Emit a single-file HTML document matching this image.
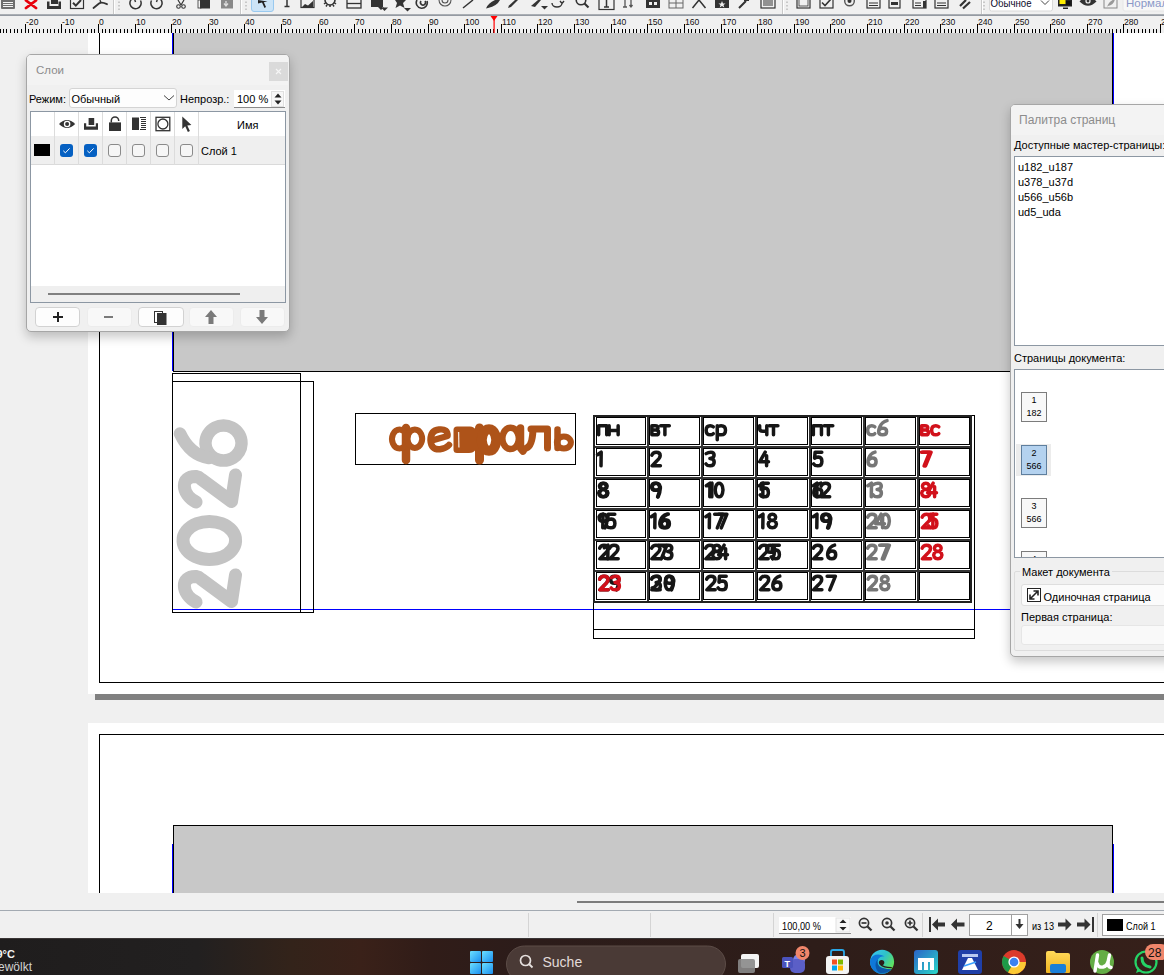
<!DOCTYPE html>
<html><head><meta charset="utf-8">
<style>
*{margin:0;padding:0;box-sizing:border-box}
html,body{width:1164px;height:975px;overflow:hidden;background:#f0f0f0;font-family:"Liberation Sans",sans-serif;position:relative}
.a{position:absolute}
.page{background:#fff}
.bk{background:#000}
.bl{background:#0000ff}
.gr{background:#c8c8c8}
svg text{font-family:"Liberation Sans",sans-serif}
</style></head><body>
<div class="a" style="left:0;top:0;width:1164px;height:14px;background:#f0f0f0"></div>
<div class="a" style="left:0;top:14px;width:1164px;height:2px;background:linear-gradient(#b4b8bc,#8a9099)"></div>
<svg class="a" style="left:0;top:0" width="1164" height="14">
 <g fill="#333" stroke="none">
  <!-- doc lines icon -->
  <path d="M1 0 H15 V8 Q15 9 14 9 H2 Q1 9 1 8Z" fill="#6e6e6e"/>
  <path d="M3 2.5h10M3 4.5h10M3 6.5h10" stroke="#f4f4f4" stroke-width="1"/>
  <!-- red X -->
  <path d="M26 0.5 L36 8 M36 0.5 L26 8" stroke="#e8000b" stroke-width="2.8" stroke-linecap="round"/>
  <!-- save/print -->
  <rect x="51" y="0" width="7" height="4"/>
  <path d="M47 1.5h2.5v4.5h9v-4.5h2.5v7.5h-14z"/>
  <!-- checkbox -->
  <rect x="70.5" y="-2" width="13" height="10.5" fill="none" stroke="#333" stroke-width="1.2"/>
  <path d="M73 2.8 L75.8 5.6 L81 0" stroke="#333" stroke-width="2" fill="none"/>
  <!-- pdf -->
  <path d="M93.5 8 L99 3.5 Q101 2 104 3 L107 4.2" stroke="#333" stroke-width="1.8" fill="none" stroke-linecap="round"/>
  <path d="M100 0 L101 3" stroke="#333" stroke-width="1.3"/>
  <!-- separators -->
  <rect x="113" y="0" width="1" height="14" fill="#c8c8c8"/><rect x="114" y="0" width="1" height="14" fill="#fff"/>
  <path d="M119 1.5v1.5M119 5v1.5M119 8.5v1.5" stroke="#b0b0b0" stroke-width="1.2"/>
  <!-- undo/redo arcs -->
  <path d="M135 -2.5 A5.6 5.6 0 1 0 140.5 0.5" stroke="#333" stroke-width="1.5" fill="none"/><path d="M134.5 -1 L135.5 2" stroke="#333" stroke-width="1.4"/>
  <path d="M157 -2.5 A5.6 5.6 0 1 1 151.5 0.5" stroke="#333" stroke-width="1.5" fill="none"/><path d="M157.5 -1 L156.5 2" stroke="#333" stroke-width="1.4"/>
  <!-- scissors -->
  <path d="M178 0 L181 5 M184 0 L181 5" stroke="#333" stroke-width="1.2"/>
  <circle cx="178.5" cy="6.5" r="1.8" fill="none" stroke="#333" stroke-width="1.1"/>
  <circle cx="183.5" cy="6.5" r="1.8" fill="none" stroke="#333" stroke-width="1.1"/>
  <!-- copy -->
  <rect x="198" y="0" width="3" height="8" fill="none" stroke="#333" stroke-width="0.8"/>
  <rect x="200" y="0" width="10" height="8.5"/>
  <!-- paste disabled -->
  <rect x="221" y="0" width="12" height="8.5" fill="#888"/>
  <path d="M226 1v4M224 3.5l2 2.5 2-2.5" stroke="#ddd" stroke-width="1.3" fill="none"/>
  <rect x="240" y="0" width="1" height="14" fill="#c8c8c8"/><rect x="241" y="0" width="1" height="14" fill="#fff"/>
  <path d="M246 1.5v1.5M246 5v1.5M246 8.5v1.5" stroke="#b0b0b0" stroke-width="1.2"/>
  <!-- selected arrow tool -->
  <rect x="251.5" y="-4" width="22" height="15.5" rx="2.5" fill="#cce4f7" stroke="#99c9ef" stroke-width="1"/>
  <path d="M258 0 L258 3.5 L262 2.5 L264.5 8 L266 7 L263.8 2.2 L267.5 1.5Z" fill="#222"/>
  <!-- text tool -->
  <path d="M287 0v6.5M284.5 6.5h5" stroke="#333" stroke-width="1.5"/>
  <!-- image frame -->
  <rect x="301" y="-2" width="13" height="9.5" fill="none" stroke="#333" stroke-width="1.2"/>
  <path d="M302 7 L305 4 L308 5.5 L313 1 V7Z"/>
  <!-- gear -->
  <circle cx="330" cy="0" r="5" fill="none" stroke="#333" stroke-width="1.6"/>
  <path d="M324 4l2 -1.5M336 4l-2-1.5M330 7v-2M326 6.5l1-1.7M334 6.5l-1-1.7" stroke="#333" stroke-width="1.5"/>
  <!-- table -->
  <rect x="347" y="-1" width="14" height="9" fill="none" stroke="#333" stroke-width="1.3"/>
  <path d="M347 3.5h14" stroke="#333" stroke-width="1.3"/>
  <!-- shape -->
  <rect x="371" y="-2" width="12" height="9" fill="#333"/>
  <rect x="373" y="-2" width="10" height="8" fill="#fff" opacity="0"/>
  <path d="M378 7 L381 10 L384 7Z M381 6h2v2"/>
  <path d="M381 7.5 L388 7.5 L384.5 11Z"/>
  <!-- star -->
  <path d="M395 0 L402 0 L406 0 L403 3 L404.5 8 L400 5.5 L395.5 8 L397 3Z"/>
  <path d="M404 8 L411 8 L407.5 11.5Z"/>
  <!-- spiral C -->
  <path d="M427 1 A5.5 5.5 0 1 1 417 0" stroke="#333" stroke-width="1.6" fill="none"/>
  <path d="M425 1 A2.5 2.5 0 1 1 421 1" stroke="#333" stroke-width="1.6" fill="none"/>
  <path d="M451 0 A6 6 0 1 1 439 0 M448 0 A3 3 0 1 1 442 0" stroke="#555" stroke-width="1.1" fill="none"/>
  <!-- line -->
  <path d="M463 8 L473 0" stroke="#333" stroke-width="1.5"/>
  <!-- pen -->
  <path d="M486 8.5 Q488 3 495 0 L500 0 Q497 6 488 8Z"/>
  <!-- pencil -->
  <path d="M508 8 L509 5.5 L515 0 L518 0 L511 7Z"/>
  <!-- calligraphy -->
  <path d="M531 6 L538 0 L541 0 L535 7Z"/>
  <path d="M541 6 L548 6 L544.5 9.5Z"/>
  <!-- rotate -->
  <path d="M552 3 A5 4 0 0 0 562 3 M560 1 L562 3.5 L564 1" stroke="#333" stroke-width="1.4" fill="none"/>
  <!-- zoom -->
  <circle cx="581" cy="0" r="4.8" fill="none" stroke="#333" stroke-width="1.6"/>
  <path d="M584.5 3.5 L588.5 7.5" stroke="#333" stroke-width="2.2"/>
  <!-- edit text -->
  <rect x="599" y="-2" width="15" height="11.5" fill="none" stroke="#333" stroke-width="1.2"/>
  <path d="M606.5 0v7M604 7h5" stroke="#333" stroke-width="1.5"/>
  <!-- text I with arrows -->
  <path d="M625 0v7M623 7h4M631 0v7M629.5 5l1.5 2 1.5-2" stroke="#555" stroke-width="1.3" fill="none"/>
  <!-- link frames -->
  <rect x="646" y="-2" width="14" height="10" fill="#333"/>
  <path d="M649 2h3v3h-3zM654 2h3v3h-3z" fill="#f0f0f0"/>
  <rect x="669" y="-2" width="14" height="10" fill="none" stroke="#666" stroke-width="1"/>
  <path d="M676 -2v10M669 3h14" stroke="#666" stroke-width="1"/>
  <!-- measure -->
  <path d="M692.5 8 L699 0 L705.5 8" stroke="#333" stroke-width="1.5" fill="none"/>
  <!-- star box -->
  <rect x="715" y="-2" width="14" height="10" fill="#333"/>
  <path d="M722 1 L723 3.5 L725.5 3.5 L723.5 5 L724.3 7.5 L722 6 L719.7 7.5 L720.5 5 L718.5 3.5 L721 3.5Z" fill="#f0f0f0"/>
  <!-- eyedropper -->
  <path d="M739 8 L746 1 M744 0 L749 0" stroke="#333" stroke-width="2"/>
  <!-- barcode -->
  <rect x="761" y="-2" width="14" height="10" fill="none" stroke="#333" stroke-width="1.2"/>
  <path d="M764 0v6M766 0v6M768 0v6M770 0v6M772 0v6" stroke="#333" stroke-width="1"/>
  <rect x="782" y="0" width="1" height="14" fill="#c8c8c8"/><rect x="783" y="0" width="1" height="14" fill="#fff"/>
  <path d="M787 1.5v1.5M787 5v1.5M787 8.5v1.5" stroke="#b0b0b0" stroke-width="1.2"/>
  <!-- form widgets -->
  <rect x="797" y="-2" width="13" height="10" fill="none" stroke="#333" stroke-width="1.2"/>
  <rect x="799" y="-2" width="9" height="8" fill="none" stroke="#333" stroke-width="0.8"/>
  <rect x="820" y="-2" width="13" height="10" fill="none" stroke="#333" stroke-width="1.2"/>
  <path d="M822 2.5 L825 5.5 L831 -1" stroke="#333" stroke-width="1.6" fill="none"/>
  <circle cx="849.5" cy="1" r="4.8" fill="none" stroke="#555" stroke-width="1.4"/><circle cx="849.5" cy="1" r="2" fill="#333"/>
  <rect x="867" y="-2" width="13" height="10" fill="none" stroke="#333" stroke-width="1.2"/><path d="M869 3h9M869 5.5h9" stroke="#333" stroke-width="1"/>
  <rect x="889" y="-2" width="11" height="10" fill="none" stroke="#333" stroke-width="1.2"/><rect x="891" y="2" width="7" height="3"/>
  <rect x="913" y="-2" width="13" height="10" fill="none" stroke="#333" stroke-width="1.2"/><rect x="923" y="1" width="3" height="7"/><path d="M915 3h6M915 5.5h6" stroke="#333" stroke-width="1"/>
  <rect x="935" y="-2" width="13" height="10" fill="none" stroke="#333" stroke-width="1.2"/><path d="M937 3h9M937 5.5h9" stroke="#333" stroke-width="1"/>
  <path d="M960 6 L966 0 M963 8.5 L970 2" stroke="#333" stroke-width="2.2"/>
  <rect x="981" y="0" width="1" height="14" fill="#c8c8c8"/><rect x="982" y="0" width="1" height="14" fill="#fff"/>
  <path d="M984 1.5v1.5M984 5v1.5M984 8.5v1.5" stroke="#b0b0b0" stroke-width="1.2"/>
  <!-- combo Обычное -->
  <rect x="989.5" y="-3" width="63" height="14" rx="2" fill="#fff" stroke="#d8d8d8" stroke-width="1"/>
  <path d="M1041 0.5 L1045 4.5 L1049 0.5" stroke="#444" stroke-width="1" fill="none"/>
  <!-- display -->
  <rect x="1058" y="-2" width="14" height="8.5" fill="#222"/><rect x="1059.5" y="-1" width="6" height="5" fill="#ffee00"/><rect x="1066" y="1" width="4.5" height="4" fill="#111"/><rect x="1063" y="7.5" width="5" height="1.5" fill="#222"/>
  <!-- eye -->
  <path d="M1079.5 1.5 Q1088 -8 1096.5 1.5 Q1088 10 1079.5 1.5Z" fill="#333"/><circle cx="1088" cy="1" r="2.6" fill="#f0f0f0"/><circle cx="1088" cy="1" r="1.4" fill="#333"/>
  <!-- leaf box -->
  <rect x="1104" y="-2" width="13" height="10" fill="none" stroke="#888" stroke-width="1"/>
  <path d="M1107 7 Q1109 1 1115 -1 Q1114 5 1108 6Z" fill="#999"/>
  <!-- input Нормаль -->
  <rect x="1123" y="-3" width="50" height="14" rx="2" fill="#f7f7f7" stroke="#e6e6e6" stroke-width="1"/>
 </g>
 <text x="990.5" y="6.5" font-size="11" fill="#0a0a2a" textLength="41" lengthAdjust="spacingAndGlyphs">Обычное</text>
 <text x="1126" y="6.5" font-size="11.5" fill="#8a98c8">Нормаль</text>
</svg>
<svg class="a" style="left:0;top:16px" width="1164" height="17">
<rect width="1164" height="17" fill="#f0f0f0"/>
<rect x="0" y="13" width="1" height="4" fill="#000"/>
<rect x="3" y="13" width="1" height="4" fill="#000"/>
<rect x="6" y="13" width="1" height="4" fill="#000"/>
<rect x="10" y="13" width="1" height="4" fill="#000"/>
<rect x="14" y="13" width="1" height="4" fill="#000"/>
<rect x="17" y="13" width="1" height="4" fill="#000"/>
<rect x="21" y="13" width="1" height="4" fill="#000"/>
<rect x="25" y="8" width="1" height="9" fill="#000"/>
<text x="26" y="9" font-size="8.6" font-family="Liberation Sans" fill="#111">-20</text>
<rect x="28" y="13" width="1" height="4" fill="#000"/>
<rect x="32" y="13" width="1" height="4" fill="#000"/>
<rect x="36" y="13" width="1" height="4" fill="#000"/>
<rect x="39" y="13" width="1" height="4" fill="#000"/>
<rect x="43" y="13" width="1" height="4" fill="#000"/>
<rect x="47" y="13" width="1" height="4" fill="#000"/>
<rect x="50" y="13" width="1" height="4" fill="#000"/>
<rect x="54" y="13" width="1" height="4" fill="#000"/>
<rect x="58" y="13" width="1" height="4" fill="#000"/>
<rect x="61" y="8" width="1" height="9" fill="#000"/>
<text x="62" y="9" font-size="8.6" font-family="Liberation Sans" fill="#111">-10</text>
<rect x="65" y="13" width="1" height="4" fill="#000"/>
<rect x="69" y="13" width="1" height="4" fill="#000"/>
<rect x="72" y="13" width="1" height="4" fill="#000"/>
<rect x="76" y="13" width="1" height="4" fill="#000"/>
<rect x="80" y="13" width="1" height="4" fill="#000"/>
<rect x="83" y="13" width="1" height="4" fill="#000"/>
<rect x="87" y="13" width="1" height="4" fill="#000"/>
<rect x="91" y="13" width="1" height="4" fill="#000"/>
<rect x="94" y="13" width="1" height="4" fill="#000"/>
<rect x="98" y="8" width="1" height="9" fill="#000"/>
<text x="99" y="9" font-size="8.6" font-family="Liberation Sans" fill="#111">0</text>
<rect x="102" y="13" width="1" height="4" fill="#000"/>
<rect x="105" y="13" width="1" height="4" fill="#000"/>
<rect x="109" y="13" width="1" height="4" fill="#000"/>
<rect x="113" y="13" width="1" height="4" fill="#000"/>
<rect x="116" y="13" width="1" height="4" fill="#000"/>
<rect x="120" y="13" width="1" height="4" fill="#000"/>
<rect x="124" y="13" width="1" height="4" fill="#000"/>
<rect x="127" y="13" width="1" height="4" fill="#000"/>
<rect x="131" y="13" width="1" height="4" fill="#000"/>
<rect x="135" y="8" width="1" height="9" fill="#000"/>
<text x="136" y="9" font-size="8.6" font-family="Liberation Sans" fill="#111">10</text>
<rect x="138" y="13" width="1" height="4" fill="#000"/>
<rect x="142" y="13" width="1" height="4" fill="#000"/>
<rect x="146" y="13" width="1" height="4" fill="#000"/>
<rect x="149" y="13" width="1" height="4" fill="#000"/>
<rect x="153" y="13" width="1" height="4" fill="#000"/>
<rect x="157" y="13" width="1" height="4" fill="#000"/>
<rect x="160" y="13" width="1" height="4" fill="#000"/>
<rect x="164" y="13" width="1" height="4" fill="#000"/>
<rect x="168" y="13" width="1" height="4" fill="#000"/>
<rect x="171" y="8" width="1" height="9" fill="#000"/>
<text x="172" y="9" font-size="8.6" font-family="Liberation Sans" fill="#111">20</text>
<rect x="175" y="13" width="1" height="4" fill="#000"/>
<rect x="179" y="13" width="1" height="4" fill="#000"/>
<rect x="182" y="13" width="1" height="4" fill="#000"/>
<rect x="186" y="13" width="1" height="4" fill="#000"/>
<rect x="190" y="13" width="1" height="4" fill="#000"/>
<rect x="193" y="13" width="1" height="4" fill="#000"/>
<rect x="197" y="13" width="1" height="4" fill="#000"/>
<rect x="201" y="13" width="1" height="4" fill="#000"/>
<rect x="204" y="13" width="1" height="4" fill="#000"/>
<rect x="208" y="8" width="1" height="9" fill="#000"/>
<text x="209" y="9" font-size="8.6" font-family="Liberation Sans" fill="#111">30</text>
<rect x="212" y="13" width="1" height="4" fill="#000"/>
<rect x="215" y="13" width="1" height="4" fill="#000"/>
<rect x="219" y="13" width="1" height="4" fill="#000"/>
<rect x="223" y="13" width="1" height="4" fill="#000"/>
<rect x="226" y="13" width="1" height="4" fill="#000"/>
<rect x="230" y="13" width="1" height="4" fill="#000"/>
<rect x="233" y="13" width="1" height="4" fill="#000"/>
<rect x="237" y="13" width="1" height="4" fill="#000"/>
<rect x="241" y="13" width="1" height="4" fill="#000"/>
<rect x="244" y="8" width="1" height="9" fill="#000"/>
<text x="245" y="9" font-size="8.6" font-family="Liberation Sans" fill="#111">40</text>
<rect x="248" y="13" width="1" height="4" fill="#000"/>
<rect x="252" y="13" width="1" height="4" fill="#000"/>
<rect x="255" y="13" width="1" height="4" fill="#000"/>
<rect x="259" y="13" width="1" height="4" fill="#000"/>
<rect x="263" y="13" width="1" height="4" fill="#000"/>
<rect x="266" y="13" width="1" height="4" fill="#000"/>
<rect x="270" y="13" width="1" height="4" fill="#000"/>
<rect x="274" y="13" width="1" height="4" fill="#000"/>
<rect x="277" y="13" width="1" height="4" fill="#000"/>
<rect x="281" y="8" width="1" height="9" fill="#000"/>
<text x="282" y="9" font-size="8.6" font-family="Liberation Sans" fill="#111">50</text>
<rect x="285" y="13" width="1" height="4" fill="#000"/>
<rect x="288" y="13" width="1" height="4" fill="#000"/>
<rect x="292" y="13" width="1" height="4" fill="#000"/>
<rect x="296" y="13" width="1" height="4" fill="#000"/>
<rect x="299" y="13" width="1" height="4" fill="#000"/>
<rect x="303" y="13" width="1" height="4" fill="#000"/>
<rect x="307" y="13" width="1" height="4" fill="#000"/>
<rect x="310" y="13" width="1" height="4" fill="#000"/>
<rect x="314" y="13" width="1" height="4" fill="#000"/>
<rect x="318" y="8" width="1" height="9" fill="#000"/>
<text x="319" y="9" font-size="8.6" font-family="Liberation Sans" fill="#111">60</text>
<rect x="321" y="13" width="1" height="4" fill="#000"/>
<rect x="325" y="13" width="1" height="4" fill="#000"/>
<rect x="329" y="13" width="1" height="4" fill="#000"/>
<rect x="332" y="13" width="1" height="4" fill="#000"/>
<rect x="336" y="13" width="1" height="4" fill="#000"/>
<rect x="340" y="13" width="1" height="4" fill="#000"/>
<rect x="343" y="13" width="1" height="4" fill="#000"/>
<rect x="347" y="13" width="1" height="4" fill="#000"/>
<rect x="351" y="13" width="1" height="4" fill="#000"/>
<rect x="354" y="8" width="1" height="9" fill="#000"/>
<text x="355" y="9" font-size="8.6" font-family="Liberation Sans" fill="#111">70</text>
<rect x="358" y="13" width="1" height="4" fill="#000"/>
<rect x="362" y="13" width="1" height="4" fill="#000"/>
<rect x="365" y="13" width="1" height="4" fill="#000"/>
<rect x="369" y="13" width="1" height="4" fill="#000"/>
<rect x="373" y="13" width="1" height="4" fill="#000"/>
<rect x="376" y="13" width="1" height="4" fill="#000"/>
<rect x="380" y="13" width="1" height="4" fill="#000"/>
<rect x="384" y="13" width="1" height="4" fill="#000"/>
<rect x="387" y="13" width="1" height="4" fill="#000"/>
<rect x="391" y="8" width="1" height="9" fill="#000"/>
<text x="392" y="9" font-size="8.6" font-family="Liberation Sans" fill="#111">80</text>
<rect x="395" y="13" width="1" height="4" fill="#000"/>
<rect x="398" y="13" width="1" height="4" fill="#000"/>
<rect x="402" y="13" width="1" height="4" fill="#000"/>
<rect x="406" y="13" width="1" height="4" fill="#000"/>
<rect x="409" y="13" width="1" height="4" fill="#000"/>
<rect x="413" y="13" width="1" height="4" fill="#000"/>
<rect x="417" y="13" width="1" height="4" fill="#000"/>
<rect x="420" y="13" width="1" height="4" fill="#000"/>
<rect x="424" y="13" width="1" height="4" fill="#000"/>
<rect x="428" y="8" width="1" height="9" fill="#000"/>
<text x="429" y="9" font-size="8.6" font-family="Liberation Sans" fill="#111">90</text>
<rect x="431" y="13" width="1" height="4" fill="#000"/>
<rect x="435" y="13" width="1" height="4" fill="#000"/>
<rect x="439" y="13" width="1" height="4" fill="#000"/>
<rect x="442" y="13" width="1" height="4" fill="#000"/>
<rect x="446" y="13" width="1" height="4" fill="#000"/>
<rect x="450" y="13" width="1" height="4" fill="#000"/>
<rect x="453" y="13" width="1" height="4" fill="#000"/>
<rect x="457" y="13" width="1" height="4" fill="#000"/>
<rect x="461" y="13" width="1" height="4" fill="#000"/>
<rect x="464" y="8" width="1" height="9" fill="#000"/>
<text x="465" y="9" font-size="8.6" font-family="Liberation Sans" fill="#111">100</text>
<rect x="468" y="13" width="1" height="4" fill="#000"/>
<rect x="472" y="13" width="1" height="4" fill="#000"/>
<rect x="475" y="13" width="1" height="4" fill="#000"/>
<rect x="479" y="13" width="1" height="4" fill="#000"/>
<rect x="483" y="13" width="1" height="4" fill="#000"/>
<rect x="486" y="13" width="1" height="4" fill="#000"/>
<rect x="490" y="13" width="1" height="4" fill="#000"/>
<rect x="493" y="13" width="1" height="4" fill="#000"/>
<rect x="497" y="13" width="1" height="4" fill="#000"/>
<rect x="501" y="8" width="1" height="9" fill="#000"/>
<text x="502" y="9" font-size="8.6" font-family="Liberation Sans" fill="#111">110</text>
<rect x="504" y="13" width="1" height="4" fill="#000"/>
<rect x="508" y="13" width="1" height="4" fill="#000"/>
<rect x="512" y="13" width="1" height="4" fill="#000"/>
<rect x="515" y="13" width="1" height="4" fill="#000"/>
<rect x="519" y="13" width="1" height="4" fill="#000"/>
<rect x="523" y="13" width="1" height="4" fill="#000"/>
<rect x="526" y="13" width="1" height="4" fill="#000"/>
<rect x="530" y="13" width="1" height="4" fill="#000"/>
<rect x="534" y="13" width="1" height="4" fill="#000"/>
<rect x="537" y="8" width="1" height="9" fill="#000"/>
<text x="538" y="9" font-size="8.6" font-family="Liberation Sans" fill="#111">120</text>
<rect x="541" y="13" width="1" height="4" fill="#000"/>
<rect x="545" y="13" width="1" height="4" fill="#000"/>
<rect x="548" y="13" width="1" height="4" fill="#000"/>
<rect x="552" y="13" width="1" height="4" fill="#000"/>
<rect x="556" y="13" width="1" height="4" fill="#000"/>
<rect x="559" y="13" width="1" height="4" fill="#000"/>
<rect x="563" y="13" width="1" height="4" fill="#000"/>
<rect x="567" y="13" width="1" height="4" fill="#000"/>
<rect x="570" y="13" width="1" height="4" fill="#000"/>
<rect x="574" y="8" width="1" height="9" fill="#000"/>
<text x="575" y="9" font-size="8.6" font-family="Liberation Sans" fill="#111">130</text>
<rect x="578" y="13" width="1" height="4" fill="#000"/>
<rect x="581" y="13" width="1" height="4" fill="#000"/>
<rect x="585" y="13" width="1" height="4" fill="#000"/>
<rect x="589" y="13" width="1" height="4" fill="#000"/>
<rect x="592" y="13" width="1" height="4" fill="#000"/>
<rect x="596" y="13" width="1" height="4" fill="#000"/>
<rect x="600" y="13" width="1" height="4" fill="#000"/>
<rect x="603" y="13" width="1" height="4" fill="#000"/>
<rect x="607" y="13" width="1" height="4" fill="#000"/>
<rect x="611" y="8" width="1" height="9" fill="#000"/>
<text x="612" y="9" font-size="8.6" font-family="Liberation Sans" fill="#111">140</text>
<rect x="614" y="13" width="1" height="4" fill="#000"/>
<rect x="618" y="13" width="1" height="4" fill="#000"/>
<rect x="622" y="13" width="1" height="4" fill="#000"/>
<rect x="625" y="13" width="1" height="4" fill="#000"/>
<rect x="629" y="13" width="1" height="4" fill="#000"/>
<rect x="633" y="13" width="1" height="4" fill="#000"/>
<rect x="636" y="13" width="1" height="4" fill="#000"/>
<rect x="640" y="13" width="1" height="4" fill="#000"/>
<rect x="644" y="13" width="1" height="4" fill="#000"/>
<rect x="647" y="8" width="1" height="9" fill="#000"/>
<text x="648" y="9" font-size="8.6" font-family="Liberation Sans" fill="#111">150</text>
<rect x="651" y="13" width="1" height="4" fill="#000"/>
<rect x="655" y="13" width="1" height="4" fill="#000"/>
<rect x="658" y="13" width="1" height="4" fill="#000"/>
<rect x="662" y="13" width="1" height="4" fill="#000"/>
<rect x="666" y="13" width="1" height="4" fill="#000"/>
<rect x="669" y="13" width="1" height="4" fill="#000"/>
<rect x="673" y="13" width="1" height="4" fill="#000"/>
<rect x="677" y="13" width="1" height="4" fill="#000"/>
<rect x="680" y="13" width="1" height="4" fill="#000"/>
<rect x="684" y="8" width="1" height="9" fill="#000"/>
<text x="685" y="9" font-size="8.6" font-family="Liberation Sans" fill="#111">160</text>
<rect x="688" y="13" width="1" height="4" fill="#000"/>
<rect x="691" y="13" width="1" height="4" fill="#000"/>
<rect x="695" y="13" width="1" height="4" fill="#000"/>
<rect x="699" y="13" width="1" height="4" fill="#000"/>
<rect x="702" y="13" width="1" height="4" fill="#000"/>
<rect x="706" y="13" width="1" height="4" fill="#000"/>
<rect x="710" y="13" width="1" height="4" fill="#000"/>
<rect x="713" y="13" width="1" height="4" fill="#000"/>
<rect x="717" y="13" width="1" height="4" fill="#000"/>
<rect x="721" y="8" width="1" height="9" fill="#000"/>
<text x="722" y="9" font-size="8.6" font-family="Liberation Sans" fill="#111">170</text>
<rect x="724" y="13" width="1" height="4" fill="#000"/>
<rect x="728" y="13" width="1" height="4" fill="#000"/>
<rect x="732" y="13" width="1" height="4" fill="#000"/>
<rect x="735" y="13" width="1" height="4" fill="#000"/>
<rect x="739" y="13" width="1" height="4" fill="#000"/>
<rect x="743" y="13" width="1" height="4" fill="#000"/>
<rect x="746" y="13" width="1" height="4" fill="#000"/>
<rect x="750" y="13" width="1" height="4" fill="#000"/>
<rect x="753" y="13" width="1" height="4" fill="#000"/>
<rect x="757" y="8" width="1" height="9" fill="#000"/>
<text x="758" y="9" font-size="8.6" font-family="Liberation Sans" fill="#111">180</text>
<rect x="761" y="13" width="1" height="4" fill="#000"/>
<rect x="764" y="13" width="1" height="4" fill="#000"/>
<rect x="768" y="13" width="1" height="4" fill="#000"/>
<rect x="772" y="13" width="1" height="4" fill="#000"/>
<rect x="775" y="13" width="1" height="4" fill="#000"/>
<rect x="779" y="13" width="1" height="4" fill="#000"/>
<rect x="783" y="13" width="1" height="4" fill="#000"/>
<rect x="786" y="13" width="1" height="4" fill="#000"/>
<rect x="790" y="13" width="1" height="4" fill="#000"/>
<rect x="794" y="8" width="1" height="9" fill="#000"/>
<text x="795" y="9" font-size="8.6" font-family="Liberation Sans" fill="#111">190</text>
<rect x="797" y="13" width="1" height="4" fill="#000"/>
<rect x="801" y="13" width="1" height="4" fill="#000"/>
<rect x="805" y="13" width="1" height="4" fill="#000"/>
<rect x="808" y="13" width="1" height="4" fill="#000"/>
<rect x="812" y="13" width="1" height="4" fill="#000"/>
<rect x="816" y="13" width="1" height="4" fill="#000"/>
<rect x="819" y="13" width="1" height="4" fill="#000"/>
<rect x="823" y="13" width="1" height="4" fill="#000"/>
<rect x="827" y="13" width="1" height="4" fill="#000"/>
<rect x="830" y="8" width="1" height="9" fill="#000"/>
<text x="831" y="9" font-size="8.6" font-family="Liberation Sans" fill="#111">200</text>
<rect x="834" y="13" width="1" height="4" fill="#000"/>
<rect x="838" y="13" width="1" height="4" fill="#000"/>
<rect x="841" y="13" width="1" height="4" fill="#000"/>
<rect x="845" y="13" width="1" height="4" fill="#000"/>
<rect x="849" y="13" width="1" height="4" fill="#000"/>
<rect x="852" y="13" width="1" height="4" fill="#000"/>
<rect x="856" y="13" width="1" height="4" fill="#000"/>
<rect x="860" y="13" width="1" height="4" fill="#000"/>
<rect x="863" y="13" width="1" height="4" fill="#000"/>
<rect x="867" y="8" width="1" height="9" fill="#000"/>
<text x="868" y="9" font-size="8.6" font-family="Liberation Sans" fill="#111">210</text>
<rect x="871" y="13" width="1" height="4" fill="#000"/>
<rect x="874" y="13" width="1" height="4" fill="#000"/>
<rect x="878" y="13" width="1" height="4" fill="#000"/>
<rect x="882" y="13" width="1" height="4" fill="#000"/>
<rect x="885" y="13" width="1" height="4" fill="#000"/>
<rect x="889" y="13" width="1" height="4" fill="#000"/>
<rect x="893" y="13" width="1" height="4" fill="#000"/>
<rect x="896" y="13" width="1" height="4" fill="#000"/>
<rect x="900" y="13" width="1" height="4" fill="#000"/>
<rect x="904" y="8" width="1" height="9" fill="#000"/>
<text x="905" y="9" font-size="8.6" font-family="Liberation Sans" fill="#111">220</text>
<rect x="907" y="13" width="1" height="4" fill="#000"/>
<rect x="911" y="13" width="1" height="4" fill="#000"/>
<rect x="915" y="13" width="1" height="4" fill="#000"/>
<rect x="918" y="13" width="1" height="4" fill="#000"/>
<rect x="922" y="13" width="1" height="4" fill="#000"/>
<rect x="926" y="13" width="1" height="4" fill="#000"/>
<rect x="929" y="13" width="1" height="4" fill="#000"/>
<rect x="933" y="13" width="1" height="4" fill="#000"/>
<rect x="937" y="13" width="1" height="4" fill="#000"/>
<rect x="940" y="8" width="1" height="9" fill="#000"/>
<text x="941" y="9" font-size="8.6" font-family="Liberation Sans" fill="#111">230</text>
<rect x="944" y="13" width="1" height="4" fill="#000"/>
<rect x="948" y="13" width="1" height="4" fill="#000"/>
<rect x="951" y="13" width="1" height="4" fill="#000"/>
<rect x="955" y="13" width="1" height="4" fill="#000"/>
<rect x="959" y="13" width="1" height="4" fill="#000"/>
<rect x="962" y="13" width="1" height="4" fill="#000"/>
<rect x="966" y="13" width="1" height="4" fill="#000"/>
<rect x="970" y="13" width="1" height="4" fill="#000"/>
<rect x="973" y="13" width="1" height="4" fill="#000"/>
<rect x="977" y="8" width="1" height="9" fill="#000"/>
<text x="978" y="9" font-size="8.6" font-family="Liberation Sans" fill="#111">240</text>
<rect x="981" y="13" width="1" height="4" fill="#000"/>
<rect x="984" y="13" width="1" height="4" fill="#000"/>
<rect x="988" y="13" width="1" height="4" fill="#000"/>
<rect x="992" y="13" width="1" height="4" fill="#000"/>
<rect x="995" y="13" width="1" height="4" fill="#000"/>
<rect x="999" y="13" width="1" height="4" fill="#000"/>
<rect x="1003" y="13" width="1" height="4" fill="#000"/>
<rect x="1006" y="13" width="1" height="4" fill="#000"/>
<rect x="1010" y="13" width="1" height="4" fill="#000"/>
<rect x="1014" y="8" width="1" height="9" fill="#000"/>
<text x="1015" y="9" font-size="8.6" font-family="Liberation Sans" fill="#111">250</text>
<rect x="1017" y="13" width="1" height="4" fill="#000"/>
<rect x="1021" y="13" width="1" height="4" fill="#000"/>
<rect x="1024" y="13" width="1" height="4" fill="#000"/>
<rect x="1028" y="13" width="1" height="4" fill="#000"/>
<rect x="1032" y="13" width="1" height="4" fill="#000"/>
<rect x="1035" y="13" width="1" height="4" fill="#000"/>
<rect x="1039" y="13" width="1" height="4" fill="#000"/>
<rect x="1043" y="13" width="1" height="4" fill="#000"/>
<rect x="1046" y="13" width="1" height="4" fill="#000"/>
<rect x="1050" y="8" width="1" height="9" fill="#000"/>
<text x="1051" y="9" font-size="8.6" font-family="Liberation Sans" fill="#111">260</text>
<rect x="1054" y="13" width="1" height="4" fill="#000"/>
<rect x="1057" y="13" width="1" height="4" fill="#000"/>
<rect x="1061" y="13" width="1" height="4" fill="#000"/>
<rect x="1065" y="13" width="1" height="4" fill="#000"/>
<rect x="1068" y="13" width="1" height="4" fill="#000"/>
<rect x="1072" y="13" width="1" height="4" fill="#000"/>
<rect x="1076" y="13" width="1" height="4" fill="#000"/>
<rect x="1079" y="13" width="1" height="4" fill="#000"/>
<rect x="1083" y="13" width="1" height="4" fill="#000"/>
<rect x="1087" y="8" width="1" height="9" fill="#000"/>
<text x="1088" y="9" font-size="8.6" font-family="Liberation Sans" fill="#111">270</text>
<rect x="1090" y="13" width="1" height="4" fill="#000"/>
<rect x="1094" y="13" width="1" height="4" fill="#000"/>
<rect x="1098" y="13" width="1" height="4" fill="#000"/>
<rect x="1101" y="13" width="1" height="4" fill="#000"/>
<rect x="1105" y="13" width="1" height="4" fill="#000"/>
<rect x="1109" y="13" width="1" height="4" fill="#000"/>
<rect x="1112" y="13" width="1" height="4" fill="#000"/>
<rect x="1116" y="13" width="1" height="4" fill="#000"/>
<rect x="1120" y="13" width="1" height="4" fill="#000"/>
<rect x="1123" y="8" width="1" height="9" fill="#000"/>
<text x="1124" y="9" font-size="8.6" font-family="Liberation Sans" fill="#111">280</text>
<rect x="1127" y="13" width="1" height="4" fill="#000"/>
<rect x="1131" y="13" width="1" height="4" fill="#000"/>
<rect x="1134" y="13" width="1" height="4" fill="#000"/>
<rect x="1138" y="13" width="1" height="4" fill="#000"/>
<rect x="1142" y="13" width="1" height="4" fill="#000"/>
<rect x="1145" y="13" width="1" height="4" fill="#000"/>
<rect x="1149" y="13" width="1" height="4" fill="#000"/>
<rect x="1153" y="13" width="1" height="4" fill="#000"/>
<rect x="1156" y="13" width="1" height="4" fill="#000"/>
<rect x="1160" y="8" width="1" height="9" fill="#000"/>
<text x="1161" y="9" font-size="8.6" font-family="Liberation Sans" fill="#111">290</text>
<rect x="1164" y="13" width="1" height="4" fill="#000"/>
<path d="M490.5 0 L497.5 0 L494 5 Z" fill="#ff0000"/><rect x="493.5" y="0" width="1.2" height="17" fill="#ff0000"/>
</svg><div class="a" style="left:0;top:33px;width:1164px;height:860px;background:#f0f0f0;overflow:hidden">
<svg class="a" style="left:0;top:0" width="1164" height="860" shape-rendering="crispEdges">
<rect x="88" y="0" width="1076" height="661" fill="#fff"/>
<rect x="99" y="0" width="1" height="650" fill="#000"/>
<rect x="99" y="649" width="1065" height="1" fill="#000"/>
<rect x="173" y="0" width="940" height="339" fill="#c8c8c8"/>
<rect x="173" y="338" width="940" height="1" fill="#000"/>
<rect x="1112" y="0" width="1" height="339" fill="#000"/>
<rect x="173" y="0" width="1" height="339" fill="#000"/>
<rect x="172" y="0" width="1" height="338" fill="#0000ff"/>
<rect x="1113" y="0" width="1" height="338" fill="#0000ff"/>
<rect x="95" y="661" width="1069" height="6" fill="#808080"/>
<rect x="88" y="690" width="1076" height="170" fill="#fff"/>
<rect x="99" y="701" width="1065" height="1" fill="#000"/>
<rect x="99" y="701" width="1" height="160" fill="#000"/>
<rect x="173" y="792" width="940" height="68" fill="#c8c8c8"/>
<rect x="173" y="792" width="940" height="1" fill="#000"/>
<rect x="173" y="792" width="1" height="68" fill="#000"/>
<rect x="1112" y="792" width="1" height="68" fill="#000"/>
<rect x="172" y="811" width="1" height="49" fill="#0000ff"/>
<rect x="1113" y="811" width="1" height="49" fill="#0000ff"/>
<rect x="173" y="576" width="991" height="1" fill="#0000ff"/>
<rect x="172" y="340" width="129" height="1" fill="#000"/>
<rect x="172" y="579" width="129" height="1" fill="#000"/>
<rect x="172" y="340" width="1" height="240" fill="#000"/>
<rect x="300" y="340" width="1" height="240" fill="#000"/>
<rect x="172" y="348" width="142" height="1" fill="#000"/>
<rect x="172" y="579" width="142" height="1" fill="#000"/>
<rect x="172" y="348" width="1" height="232" fill="#000"/>
<rect x="313" y="348" width="1" height="232" fill="#000"/>
<rect x="355" y="380" width="221" height="1" fill="#000"/>
<rect x="355" y="431" width="221" height="1" fill="#000"/>
<rect x="355" y="380" width="1" height="52" fill="#000"/>
<rect x="575" y="380" width="1" height="52" fill="#000"/>
<rect x="593" y="382" width="382" height="1" fill="#000"/>
<rect x="593" y="605" width="382" height="1" fill="#000"/>
<rect x="593" y="382" width="1" height="224" fill="#000"/>
<rect x="974" y="382" width="1" height="224" fill="#000"/>
<rect x="593" y="596" width="382" height="1" fill="#000"/>
<rect x="593" y="382" width="379" height="2" fill="#222"/>
<rect x="593" y="568" width="379" height="2" fill="#222"/>
<rect x="593" y="382" width="2" height="188" fill="#222"/>
<rect x="970" y="382" width="2" height="188" fill="#222"/>
<rect x="647" y="384" width="2" height="184" fill="#333"/>
<rect x="701" y="384" width="2" height="184" fill="#333"/>
<rect x="755" y="384" width="2" height="184" fill="#333"/>
<rect x="809" y="384" width="2" height="184" fill="#333"/>
<rect x="863" y="384" width="2" height="184" fill="#333"/>
<rect x="917" y="384" width="2" height="184" fill="#333"/>
<rect x="595" y="413" width="375" height="2" fill="#333"/>
<rect x="595" y="444" width="375" height="2" fill="#333"/>
<rect x="595" y="475" width="375" height="2" fill="#333"/>
<rect x="595" y="506" width="375" height="2" fill="#333"/>
<rect x="595" y="537" width="375" height="2" fill="#333"/>
<rect x="596" y="384" width="50" height="1" fill="#000"/>
<rect x="596" y="411" width="50" height="1" fill="#000"/>
<rect x="596" y="384" width="1" height="28" fill="#000"/>
<rect x="645" y="384" width="1" height="28" fill="#000"/>
<rect x="596" y="415" width="50" height="1" fill="#000"/>
<rect x="596" y="442" width="50" height="1" fill="#000"/>
<rect x="596" y="415" width="1" height="28" fill="#000"/>
<rect x="645" y="415" width="1" height="28" fill="#000"/>
<rect x="596" y="446" width="50" height="1" fill="#000"/>
<rect x="596" y="473" width="50" height="1" fill="#000"/>
<rect x="596" y="446" width="1" height="28" fill="#000"/>
<rect x="645" y="446" width="1" height="28" fill="#000"/>
<rect x="596" y="477" width="50" height="1" fill="#000"/>
<rect x="596" y="504" width="50" height="1" fill="#000"/>
<rect x="596" y="477" width="1" height="28" fill="#000"/>
<rect x="645" y="477" width="1" height="28" fill="#000"/>
<rect x="596" y="508" width="50" height="1" fill="#000"/>
<rect x="596" y="535" width="50" height="1" fill="#000"/>
<rect x="596" y="508" width="1" height="28" fill="#000"/>
<rect x="645" y="508" width="1" height="28" fill="#000"/>
<rect x="596" y="539" width="50" height="1" fill="#000"/>
<rect x="596" y="566" width="50" height="1" fill="#000"/>
<rect x="596" y="539" width="1" height="28" fill="#000"/>
<rect x="645" y="539" width="1" height="28" fill="#000"/>
<rect x="649" y="384" width="51" height="1" fill="#000"/>
<rect x="649" y="411" width="51" height="1" fill="#000"/>
<rect x="649" y="384" width="1" height="28" fill="#000"/>
<rect x="699" y="384" width="1" height="28" fill="#000"/>
<rect x="649" y="415" width="51" height="1" fill="#000"/>
<rect x="649" y="442" width="51" height="1" fill="#000"/>
<rect x="649" y="415" width="1" height="28" fill="#000"/>
<rect x="699" y="415" width="1" height="28" fill="#000"/>
<rect x="649" y="446" width="51" height="1" fill="#000"/>
<rect x="649" y="473" width="51" height="1" fill="#000"/>
<rect x="649" y="446" width="1" height="28" fill="#000"/>
<rect x="699" y="446" width="1" height="28" fill="#000"/>
<rect x="649" y="477" width="51" height="1" fill="#000"/>
<rect x="649" y="504" width="51" height="1" fill="#000"/>
<rect x="649" y="477" width="1" height="28" fill="#000"/>
<rect x="699" y="477" width="1" height="28" fill="#000"/>
<rect x="649" y="508" width="51" height="1" fill="#000"/>
<rect x="649" y="535" width="51" height="1" fill="#000"/>
<rect x="649" y="508" width="1" height="28" fill="#000"/>
<rect x="699" y="508" width="1" height="28" fill="#000"/>
<rect x="649" y="539" width="51" height="1" fill="#000"/>
<rect x="649" y="566" width="51" height="1" fill="#000"/>
<rect x="649" y="539" width="1" height="28" fill="#000"/>
<rect x="699" y="539" width="1" height="28" fill="#000"/>
<rect x="703" y="384" width="51" height="1" fill="#000"/>
<rect x="703" y="411" width="51" height="1" fill="#000"/>
<rect x="703" y="384" width="1" height="28" fill="#000"/>
<rect x="753" y="384" width="1" height="28" fill="#000"/>
<rect x="703" y="415" width="51" height="1" fill="#000"/>
<rect x="703" y="442" width="51" height="1" fill="#000"/>
<rect x="703" y="415" width="1" height="28" fill="#000"/>
<rect x="753" y="415" width="1" height="28" fill="#000"/>
<rect x="703" y="446" width="51" height="1" fill="#000"/>
<rect x="703" y="473" width="51" height="1" fill="#000"/>
<rect x="703" y="446" width="1" height="28" fill="#000"/>
<rect x="753" y="446" width="1" height="28" fill="#000"/>
<rect x="703" y="477" width="51" height="1" fill="#000"/>
<rect x="703" y="504" width="51" height="1" fill="#000"/>
<rect x="703" y="477" width="1" height="28" fill="#000"/>
<rect x="753" y="477" width="1" height="28" fill="#000"/>
<rect x="703" y="508" width="51" height="1" fill="#000"/>
<rect x="703" y="535" width="51" height="1" fill="#000"/>
<rect x="703" y="508" width="1" height="28" fill="#000"/>
<rect x="753" y="508" width="1" height="28" fill="#000"/>
<rect x="703" y="539" width="51" height="1" fill="#000"/>
<rect x="703" y="566" width="51" height="1" fill="#000"/>
<rect x="703" y="539" width="1" height="28" fill="#000"/>
<rect x="753" y="539" width="1" height="28" fill="#000"/>
<rect x="757" y="384" width="51" height="1" fill="#000"/>
<rect x="757" y="411" width="51" height="1" fill="#000"/>
<rect x="757" y="384" width="1" height="28" fill="#000"/>
<rect x="807" y="384" width="1" height="28" fill="#000"/>
<rect x="757" y="415" width="51" height="1" fill="#000"/>
<rect x="757" y="442" width="51" height="1" fill="#000"/>
<rect x="757" y="415" width="1" height="28" fill="#000"/>
<rect x="807" y="415" width="1" height="28" fill="#000"/>
<rect x="757" y="446" width="51" height="1" fill="#000"/>
<rect x="757" y="473" width="51" height="1" fill="#000"/>
<rect x="757" y="446" width="1" height="28" fill="#000"/>
<rect x="807" y="446" width="1" height="28" fill="#000"/>
<rect x="757" y="477" width="51" height="1" fill="#000"/>
<rect x="757" y="504" width="51" height="1" fill="#000"/>
<rect x="757" y="477" width="1" height="28" fill="#000"/>
<rect x="807" y="477" width="1" height="28" fill="#000"/>
<rect x="757" y="508" width="51" height="1" fill="#000"/>
<rect x="757" y="535" width="51" height="1" fill="#000"/>
<rect x="757" y="508" width="1" height="28" fill="#000"/>
<rect x="807" y="508" width="1" height="28" fill="#000"/>
<rect x="757" y="539" width="51" height="1" fill="#000"/>
<rect x="757" y="566" width="51" height="1" fill="#000"/>
<rect x="757" y="539" width="1" height="28" fill="#000"/>
<rect x="807" y="539" width="1" height="28" fill="#000"/>
<rect x="811" y="384" width="51" height="1" fill="#000"/>
<rect x="811" y="411" width="51" height="1" fill="#000"/>
<rect x="811" y="384" width="1" height="28" fill="#000"/>
<rect x="861" y="384" width="1" height="28" fill="#000"/>
<rect x="811" y="415" width="51" height="1" fill="#000"/>
<rect x="811" y="442" width="51" height="1" fill="#000"/>
<rect x="811" y="415" width="1" height="28" fill="#000"/>
<rect x="861" y="415" width="1" height="28" fill="#000"/>
<rect x="811" y="446" width="51" height="1" fill="#000"/>
<rect x="811" y="473" width="51" height="1" fill="#000"/>
<rect x="811" y="446" width="1" height="28" fill="#000"/>
<rect x="861" y="446" width="1" height="28" fill="#000"/>
<rect x="811" y="477" width="51" height="1" fill="#000"/>
<rect x="811" y="504" width="51" height="1" fill="#000"/>
<rect x="811" y="477" width="1" height="28" fill="#000"/>
<rect x="861" y="477" width="1" height="28" fill="#000"/>
<rect x="811" y="508" width="51" height="1" fill="#000"/>
<rect x="811" y="535" width="51" height="1" fill="#000"/>
<rect x="811" y="508" width="1" height="28" fill="#000"/>
<rect x="861" y="508" width="1" height="28" fill="#000"/>
<rect x="811" y="539" width="51" height="1" fill="#000"/>
<rect x="811" y="566" width="51" height="1" fill="#000"/>
<rect x="811" y="539" width="1" height="28" fill="#000"/>
<rect x="861" y="539" width="1" height="28" fill="#000"/>
<rect x="865" y="384" width="51" height="1" fill="#000"/>
<rect x="865" y="411" width="51" height="1" fill="#000"/>
<rect x="865" y="384" width="1" height="28" fill="#000"/>
<rect x="915" y="384" width="1" height="28" fill="#000"/>
<rect x="865" y="415" width="51" height="1" fill="#000"/>
<rect x="865" y="442" width="51" height="1" fill="#000"/>
<rect x="865" y="415" width="1" height="28" fill="#000"/>
<rect x="915" y="415" width="1" height="28" fill="#000"/>
<rect x="865" y="446" width="51" height="1" fill="#000"/>
<rect x="865" y="473" width="51" height="1" fill="#000"/>
<rect x="865" y="446" width="1" height="28" fill="#000"/>
<rect x="915" y="446" width="1" height="28" fill="#000"/>
<rect x="865" y="477" width="51" height="1" fill="#000"/>
<rect x="865" y="504" width="51" height="1" fill="#000"/>
<rect x="865" y="477" width="1" height="28" fill="#000"/>
<rect x="915" y="477" width="1" height="28" fill="#000"/>
<rect x="865" y="508" width="51" height="1" fill="#000"/>
<rect x="865" y="535" width="51" height="1" fill="#000"/>
<rect x="865" y="508" width="1" height="28" fill="#000"/>
<rect x="915" y="508" width="1" height="28" fill="#000"/>
<rect x="865" y="539" width="51" height="1" fill="#000"/>
<rect x="865" y="566" width="51" height="1" fill="#000"/>
<rect x="865" y="539" width="1" height="28" fill="#000"/>
<rect x="915" y="539" width="1" height="28" fill="#000"/>
<rect x="919" y="384" width="51" height="1" fill="#000"/>
<rect x="919" y="411" width="51" height="1" fill="#000"/>
<rect x="919" y="384" width="1" height="28" fill="#000"/>
<rect x="969" y="384" width="1" height="28" fill="#000"/>
<rect x="919" y="415" width="51" height="1" fill="#000"/>
<rect x="919" y="442" width="51" height="1" fill="#000"/>
<rect x="919" y="415" width="1" height="28" fill="#000"/>
<rect x="969" y="415" width="1" height="28" fill="#000"/>
<rect x="919" y="446" width="51" height="1" fill="#000"/>
<rect x="919" y="473" width="51" height="1" fill="#000"/>
<rect x="919" y="446" width="1" height="28" fill="#000"/>
<rect x="969" y="446" width="1" height="28" fill="#000"/>
<rect x="919" y="477" width="51" height="1" fill="#000"/>
<rect x="919" y="504" width="51" height="1" fill="#000"/>
<rect x="919" y="477" width="1" height="28" fill="#000"/>
<rect x="969" y="477" width="1" height="28" fill="#000"/>
<rect x="919" y="508" width="51" height="1" fill="#000"/>
<rect x="919" y="535" width="51" height="1" fill="#000"/>
<rect x="919" y="508" width="1" height="28" fill="#000"/>
<rect x="969" y="508" width="1" height="28" fill="#000"/>
<rect x="919" y="539" width="51" height="1" fill="#000"/>
<rect x="919" y="566" width="51" height="1" fill="#000"/>
<rect x="919" y="539" width="1" height="28" fill="#000"/>
<rect x="969" y="539" width="1" height="28" fill="#000"/>
</svg>
<svg class="a" style="left:0;top:0" width="1164" height="860">
<path transform="translate(597,391)" d="M1.65 10.85 L1.65 1.65 L9.75 1.65 L9.75 10.85" stroke="#161616" stroke-width="3.5" fill="none" stroke-linecap="round" stroke-linejoin="round"/>
<path transform="translate(607.5,391)" d="M1.65 1.65 L1.65 10.85 M1.65 6.4 L10.65 6.4 M10.65 1.65 L10.65 10.85" stroke="#161616" stroke-width="3.5" fill="none" stroke-linecap="round" stroke-linejoin="round"/>
<path transform="translate(650.2,391)" d="M1.65 1.65 L1.65 10.85 L5.8 10.85 Q8.4 10.85 8.4 8.4 Q8.4 6 5.8 6 L1.65 6 M1.65 1.65 L5 1.65 Q7.8 1.65 7.8 3.8 Q7.8 6 5.5 6" stroke="#161616" stroke-width="3.5" fill="none" stroke-linecap="round" stroke-linejoin="round"/>
<path transform="translate(659,391)" d="M1.65 1.65 L10.3 1.65 M5.9 1.65 L5.9 10.85" stroke="#161616" stroke-width="3.5" fill="none" stroke-linecap="round" stroke-linejoin="round"/>
<path transform="translate(704.5,391)" d="M8.8 2.8 Q7.5 1.65 5.8 1.65 Q1.65 1.65 1.65 6.25 Q1.65 10.85 5.8 10.85 Q7.5 10.85 8.8 9.7" stroke="#161616" stroke-width="3.5" fill="none" stroke-linecap="round" stroke-linejoin="round"/>
<path transform="translate(715.6,391)" d="M1.65 1.65 L1.65 15.8 M1.65 3 Q3 1.65 5.5 1.65 Q9.9 1.65 9.9 6.25 Q9.9 10.85 5.5 10.85 Q3 10.85 1.65 9.5" stroke="#161616" stroke-width="3.5" fill="none" stroke-linecap="round" stroke-linejoin="round"/>
<path transform="translate(758,391)" d="M1.65 1.65 L1.65 4.5 Q1.65 7.3 5 7.3 L8.8 7.3 M8.8 1.65 L8.8 10.85" stroke="#161616" stroke-width="3.5" fill="none" stroke-linecap="round" stroke-linejoin="round"/>
<path transform="translate(767.6,391)" d="M1.65 1.65 L10.3 1.65 M5.9 1.65 L5.9 10.85" stroke="#161616" stroke-width="3.5" fill="none" stroke-linecap="round" stroke-linejoin="round"/>
<path transform="translate(811.7,391)" d="M1.65 10.85 L1.65 1.65 L9.75 1.65 L9.75 10.85" stroke="#161616" stroke-width="3.5" fill="none" stroke-linecap="round" stroke-linejoin="round"/>
<path transform="translate(822.5,391)" d="M1.65 1.65 L10.3 1.65 M5.9 1.65 L5.9 10.85" stroke="#161616" stroke-width="3.5" fill="none" stroke-linecap="round" stroke-linejoin="round"/>
<path transform="translate(866,391)" d="M8.8 2.8 Q7.5 1.65 5.8 1.65 Q1.65 1.65 1.65 6.25 Q1.65 10.85 5.8 10.85 Q7.5 10.85 8.8 9.7" stroke="#767676" stroke-width="3.5" fill="none" stroke-linecap="round" stroke-linejoin="round"/>
<path transform="translate(877,391)" d="M10 -3.4 Q5 -2.2 3 2.5 Q1.65 5.5 1.65 7.6 Q1.65 10.85 5.6 10.85 Q9.6 10.85 9.6 7.4 Q9.6 4.3 5.8 4.3 Q3 4.3 2 6.2" stroke="#767676" stroke-width="3.5" fill="none" stroke-linecap="round" stroke-linejoin="round"/>
<path transform="translate(920,391)" d="M1.65 1.65 L1.65 10.85 L5.8 10.85 Q8.4 10.85 8.4 8.4 Q8.4 6 5.8 6 L1.65 6 M1.65 1.65 L5 1.65 Q7.8 1.65 7.8 3.8 Q7.8 6 5.5 6" stroke="#d1111b" stroke-width="3.5" fill="none" stroke-linecap="round" stroke-linejoin="round"/>
<path transform="translate(930,391)" d="M8.8 2.8 Q7.5 1.65 5.8 1.65 Q1.65 1.65 1.65 6.25 Q1.65 10.85 5.8 10.85 Q7.5 10.85 8.8 9.7" stroke="#d1111b" stroke-width="3.5" fill="none" stroke-linecap="round" stroke-linejoin="round"/>
<path transform="translate(596.2,417.5)" d="M1.3 4.2 L5 1.65 L4.8 15.35" stroke="#161616" stroke-width="3.5" fill="none" stroke-linecap="round" stroke-linejoin="round"/>
<path transform="translate(650.2,417.5)" d="M1.65 4.6 Q2.8 1.65 6 1.65 Q10 1.65 10 5 Q10 7.5 6.5 10.5 L1.8 15.35 L10.2 15.35" stroke="#161616" stroke-width="3.5" fill="none" stroke-linecap="round" stroke-linejoin="round"/>
<path transform="translate(704.3,417.5)" d="M1.8 3.1 Q4 1.65 6.5 1.65 Q9.8 1.65 9.8 4.6 Q9.8 7.8 5.6 8 Q9.9 8.2 9.9 11.6 Q9.9 15.35 5.8 15.35 Q3 15.35 1.65 13.4" stroke="#161616" stroke-width="3.5" fill="none" stroke-linecap="round" stroke-linejoin="round"/>
<path transform="translate(758,417.5)" d="M7.2 1.65 L1.65 11.3 L10.5 11.3 M8.6 5.2 L8.6 15.35" stroke="#161616" stroke-width="3.5" fill="none" stroke-linecap="round" stroke-linejoin="round"/>
<path transform="translate(812,417.5)" d="M9.8 1.65 L3.1 1.65 L2.6 7.7 Q4.5 6.6 6.5 6.6 Q9.9 6.8 9.9 10.9 Q9.9 15.35 5.8 15.35 Q3 15.35 1.65 13.4" stroke="#161616" stroke-width="3.5" fill="none" stroke-linecap="round" stroke-linejoin="round"/>
<path transform="translate(866.2,417.5)" d="M8.8 1.65 Q4 3 2.3 8 Q1.65 10 1.8 11.5 Q2.2 15.35 6 15.35 Q9.9 15.35 9.9 11.3 Q9.9 7.6 6.2 7.6 Q3.5 7.6 2 10" stroke="#767676" stroke-width="3.5" fill="none" stroke-linecap="round" stroke-linejoin="round"/>
<path transform="translate(919.8,417.5)" d="M1.65 1.65 L9.9 1.65 L4.3 15.35" stroke="#d1111b" stroke-width="3.5" fill="none" stroke-linecap="round" stroke-linejoin="round"/>
<path transform="translate(921.2,417.5)" d="M1.65 1.65 L9.9 1.65 L4.3 15.35" stroke="#d1111b" stroke-width="3.5" fill="none" stroke-linecap="round" stroke-linejoin="round"/>
<path transform="translate(597,448.5)" d="M5.8 1.65 A3.4 3.15 0 1 0 5.81 1.65Z M5.8 7.85 A4.1 3.75 0 1 0 5.81 7.85Z" stroke="#161616" stroke-width="3.5" fill="none" stroke-linecap="round" stroke-linejoin="round"/>
<path transform="translate(598,448.5)" d="M5.8 1.65 A3.4 3.15 0 1 0 5.81 1.65Z M5.8 7.85 A4.1 3.75 0 1 0 5.81 7.85Z" stroke="#161616" stroke-width="3.5" fill="none" stroke-linecap="round" stroke-linejoin="round"/>
<path transform="translate(650,448.5)" d="M9.8 7 Q9.6 1.65 5.8 1.65 Q1.65 1.65 1.65 5.2 Q1.65 8.8 5.6 8.8 Q9 8.8 9.8 6 M9.8 5.5 Q9.6 11 7.6 15.35" stroke="#161616" stroke-width="3.5" fill="none" stroke-linecap="round" stroke-linejoin="round"/>
<path transform="translate(650.6,448.5)" d="M9.8 7 Q9.6 1.65 5.8 1.65 Q1.65 1.65 1.65 5.2 Q1.65 8.8 5.6 8.8 Q9 8.8 9.8 6 M9.8 5.5 Q9.6 11 7.6 15.35" stroke="#161616" stroke-width="3.5" fill="none" stroke-linecap="round" stroke-linejoin="round"/>
<path transform="translate(705,448.5)" d="M1.3 4.2 L5 1.65 L4.8 15.35" stroke="#161616" stroke-width="3.5" fill="none" stroke-linecap="round" stroke-linejoin="round"/>
<path transform="translate(707,448.5)" d="M1.3 4.2 L5 1.65 L4.8 15.35" stroke="#161616" stroke-width="3.5" fill="none" stroke-linecap="round" stroke-linejoin="round"/>
<path transform="translate(713.6,448.5)" d="M5.5 1.6500000000000004 A3.85 6.85 0 1 0 5.51 1.6500000000000004Z" stroke="#161616" stroke-width="3.5" fill="none" stroke-linecap="round" stroke-linejoin="round"/>
<path transform="translate(758,448.5)" d="M1.3 4.2 L5 1.65 L4.8 15.35" stroke="#161616" stroke-width="3.5" fill="none" stroke-linecap="round" stroke-linejoin="round"/>
<path transform="translate(758.5,448.5)" d="M9.8 1.65 L3.1 1.65 L2.6 7.7 Q4.5 6.6 6.5 6.6 Q9.9 6.8 9.9 10.9 Q9.9 15.35 5.8 15.35 Q3 15.35 1.65 13.4" stroke="#161616" stroke-width="3.5" fill="none" stroke-linecap="round" stroke-linejoin="round"/>
<path transform="translate(812,448.5)" d="M1.3 4.2 L5 1.65 L4.8 15.35" stroke="#161616" stroke-width="3.5" fill="none" stroke-linecap="round" stroke-linejoin="round"/>
<path transform="translate(812,448.5)" d="M8.8 1.65 Q4 3 2.3 8 Q1.65 10 1.8 11.5 Q2.2 15.35 6 15.35 Q9.9 15.35 9.9 11.3 Q9.9 7.6 6.2 7.6 Q3.5 7.6 2 10" stroke="#161616" stroke-width="3.5" fill="none" stroke-linecap="round" stroke-linejoin="round"/>
<path transform="translate(819.5,448.5)" d="M1.65 4.6 Q2.8 1.65 6 1.65 Q10 1.65 10 5 Q10 7.5 6.5 10.5 L1.8 15.35 L10.2 15.35" stroke="#161616" stroke-width="3.5" fill="none" stroke-linecap="round" stroke-linejoin="round"/>
<path transform="translate(866.5,448.5)" d="M1.3 4.2 L5 1.65 L4.8 15.35" stroke="#767676" stroke-width="3.5" fill="none" stroke-linecap="round" stroke-linejoin="round"/>
<path transform="translate(871.5,448.5)" d="M1.8 3.1 Q4 1.65 6.5 1.65 Q9.8 1.65 9.8 4.6 Q9.8 7.8 5.6 8 Q9.9 8.2 9.9 11.6 Q9.9 15.35 5.8 15.35 Q3 15.35 1.65 13.4" stroke="#767676" stroke-width="3.5" fill="none" stroke-linecap="round" stroke-linejoin="round"/>
<path transform="translate(920,448.5)" d="M5.8 1.65 A3.4 3.15 0 1 0 5.81 1.65Z M5.8 7.85 A4.1 3.75 0 1 0 5.81 7.85Z" stroke="#d1111b" stroke-width="3.5" fill="none" stroke-linecap="round" stroke-linejoin="round"/>
<path transform="translate(926,448.5)" d="M7.2 1.65 L1.65 11.3 L10.5 11.3 M8.6 5.2 L8.6 15.35" stroke="#d1111b" stroke-width="3.5" fill="none" stroke-linecap="round" stroke-linejoin="round"/>
<path transform="translate(598,479.5)" d="M1.3 4.2 L5 1.65 L4.8 15.35" stroke="#161616" stroke-width="3.5" fill="none" stroke-linecap="round" stroke-linejoin="round"/>
<path transform="translate(597.5,479.5)" d="M9.8 7 Q9.6 1.65 5.8 1.65 Q1.65 1.65 1.65 5.2 Q1.65 8.8 5.6 8.8 Q9 8.8 9.8 6 M9.8 5.5 Q9.6 11 7.6 15.35" stroke="#161616" stroke-width="3.5" fill="none" stroke-linecap="round" stroke-linejoin="round"/>
<path transform="translate(605,479.5)" d="M9.8 1.65 L3.1 1.65 L2.6 7.7 Q4.5 6.6 6.5 6.6 Q9.9 6.8 9.9 10.9 Q9.9 15.35 5.8 15.35 Q3 15.35 1.65 13.4" stroke="#161616" stroke-width="3.5" fill="none" stroke-linecap="round" stroke-linejoin="round"/>
<path transform="translate(650,479.5)" d="M1.3 4.2 L5 1.65 L4.8 15.35" stroke="#161616" stroke-width="3.5" fill="none" stroke-linecap="round" stroke-linejoin="round"/>
<path transform="translate(658,479.5)" d="M8.8 1.65 Q4 3 2.3 8 Q1.65 10 1.8 11.5 Q2.2 15.35 6 15.35 Q9.9 15.35 9.9 11.3 Q9.9 7.6 6.2 7.6 Q3.5 7.6 2 10" stroke="#161616" stroke-width="3.5" fill="none" stroke-linecap="round" stroke-linejoin="round"/>
<path transform="translate(659.5,479.5)" d="M8.8 1.65 Q4 3 2.3 8 Q1.65 10 1.8 11.5 Q2.2 15.35 6 15.35 Q9.9 15.35 9.9 11.3 Q9.9 7.6 6.2 7.6 Q3.5 7.6 2 10" stroke="#161616" stroke-width="3.5" fill="none" stroke-linecap="round" stroke-linejoin="round"/>
<path transform="translate(704.5,479.5)" d="M1.3 4.2 L5 1.65 L4.8 15.35" stroke="#161616" stroke-width="3.5" fill="none" stroke-linecap="round" stroke-linejoin="round"/>
<path transform="translate(713,479.5)" d="M1.65 1.65 L9.9 1.65 L4.3 15.35" stroke="#161616" stroke-width="3.5" fill="none" stroke-linecap="round" stroke-linejoin="round"/>
<path transform="translate(717,479.5)" d="M1.65 1.65 L9.9 1.65 L4.3 15.35" stroke="#161616" stroke-width="3.5" fill="none" stroke-linecap="round" stroke-linejoin="round"/>
<path transform="translate(758,479.5)" d="M1.3 4.2 L5 1.65 L4.8 15.35" stroke="#161616" stroke-width="3.5" fill="none" stroke-linecap="round" stroke-linejoin="round"/>
<path transform="translate(766.5,479.5)" d="M5.8 1.65 A3.4 3.15 0 1 0 5.81 1.65Z M5.8 7.85 A4.1 3.75 0 1 0 5.81 7.85Z" stroke="#161616" stroke-width="3.5" fill="none" stroke-linecap="round" stroke-linejoin="round"/>
<path transform="translate(812,479.5)" d="M1.3 4.2 L5 1.65 L4.8 15.35" stroke="#161616" stroke-width="3.5" fill="none" stroke-linecap="round" stroke-linejoin="round"/>
<path transform="translate(820,479.5)" d="M9.8 7 Q9.6 1.65 5.8 1.65 Q1.65 1.65 1.65 5.2 Q1.65 8.8 5.6 8.8 Q9 8.8 9.8 6 M9.8 5.5 Q9.6 11 7.6 15.35" stroke="#161616" stroke-width="3.5" fill="none" stroke-linecap="round" stroke-linejoin="round"/>
<path transform="translate(821,479.5)" d="M9.8 7 Q9.6 1.65 5.8 1.65 Q1.65 1.65 1.65 5.2 Q1.65 8.8 5.6 8.8 Q9 8.8 9.8 6 M9.8 5.5 Q9.6 11 7.6 15.35" stroke="#161616" stroke-width="3.5" fill="none" stroke-linecap="round" stroke-linejoin="round"/>
<path transform="translate(866,479.5)" d="M1.65 4.6 Q2.8 1.65 6 1.65 Q10 1.65 10 5 Q10 7.5 6.5 10.5 L1.8 15.35 L10.2 15.35" stroke="#767676" stroke-width="3.5" fill="none" stroke-linecap="round" stroke-linejoin="round"/>
<path transform="translate(874,479.5)" d="M7.2 1.65 L1.65 11.3 L10.5 11.3 M8.6 5.2 L8.6 15.35" stroke="#767676" stroke-width="3.5" fill="none" stroke-linecap="round" stroke-linejoin="round"/>
<path transform="translate(880,479.5)" d="M5.5 1.6500000000000004 A3.85 6.85 0 1 0 5.51 1.6500000000000004Z" stroke="#767676" stroke-width="3.5" fill="none" stroke-linecap="round" stroke-linejoin="round"/>
<path transform="translate(920.5,479.5)" d="M1.65 4.6 Q2.8 1.65 6 1.65 Q10 1.65 10 5 Q10 7.5 6.5 10.5 L1.8 15.35 L10.2 15.35" stroke="#d1111b" stroke-width="3.5" fill="none" stroke-linecap="round" stroke-linejoin="round"/>
<path transform="translate(928,479.5)" d="M1.3 4.2 L5 1.65 L4.8 15.35" stroke="#d1111b" stroke-width="3.5" fill="none" stroke-linecap="round" stroke-linejoin="round"/>
<path transform="translate(927,479.5)" d="M9.8 1.65 L3.1 1.65 L2.6 7.7 Q4.5 6.6 6.5 6.6 Q9.9 6.8 9.9 10.9 Q9.9 15.35 5.8 15.35 Q3 15.35 1.65 13.4" stroke="#d1111b" stroke-width="3.5" fill="none" stroke-linecap="round" stroke-linejoin="round"/>
<path transform="translate(598,510.5)" d="M1.65 4.6 Q2.8 1.65 6 1.65 Q10 1.65 10 5 Q10 7.5 6.5 10.5 L1.8 15.35 L10.2 15.35" stroke="#161616" stroke-width="3.5" fill="none" stroke-linecap="round" stroke-linejoin="round"/>
<path transform="translate(603,510.5)" d="M1.3 4.2 L5 1.65 L4.8 15.35" stroke="#161616" stroke-width="3.5" fill="none" stroke-linecap="round" stroke-linejoin="round"/>
<path transform="translate(608,510.5)" d="M1.65 4.6 Q2.8 1.65 6 1.65 Q10 1.65 10 5 Q10 7.5 6.5 10.5 L1.8 15.35 L10.2 15.35" stroke="#161616" stroke-width="3.5" fill="none" stroke-linecap="round" stroke-linejoin="round"/>
<path transform="translate(650,510.5)" d="M1.65 4.6 Q2.8 1.65 6 1.65 Q10 1.65 10 5 Q10 7.5 6.5 10.5 L1.8 15.35 L10.2 15.35" stroke="#161616" stroke-width="3.5" fill="none" stroke-linecap="round" stroke-linejoin="round"/>
<path transform="translate(657,510.5)" d="M1.65 1.65 L9.9 1.65 L4.3 15.35" stroke="#161616" stroke-width="3.5" fill="none" stroke-linecap="round" stroke-linejoin="round"/>
<path transform="translate(662,510.5)" d="M1.8 3.1 Q4 1.65 6.5 1.65 Q9.8 1.65 9.8 4.6 Q9.8 7.8 5.6 8 Q9.9 8.2 9.9 11.6 Q9.9 15.35 5.8 15.35 Q3 15.35 1.65 13.4" stroke="#161616" stroke-width="3.5" fill="none" stroke-linecap="round" stroke-linejoin="round"/>
<path transform="translate(704,510.5)" d="M1.65 4.6 Q2.8 1.65 6 1.65 Q10 1.65 10 5 Q10 7.5 6.5 10.5 L1.8 15.35 L10.2 15.35" stroke="#161616" stroke-width="3.5" fill="none" stroke-linecap="round" stroke-linejoin="round"/>
<path transform="translate(711,510.5)" d="M5.8 1.65 A3.4 3.15 0 1 0 5.81 1.65Z M5.8 7.85 A4.1 3.75 0 1 0 5.81 7.85Z" stroke="#161616" stroke-width="3.5" fill="none" stroke-linecap="round" stroke-linejoin="round"/>
<path transform="translate(717,510.5)" d="M7.2 1.65 L1.65 11.3 L10.5 11.3 M8.6 5.2 L8.6 15.35" stroke="#161616" stroke-width="3.5" fill="none" stroke-linecap="round" stroke-linejoin="round"/>
<path transform="translate(758,510.5)" d="M1.65 4.6 Q2.8 1.65 6 1.65 Q10 1.65 10 5 Q10 7.5 6.5 10.5 L1.8 15.35 L10.2 15.35" stroke="#161616" stroke-width="3.5" fill="none" stroke-linecap="round" stroke-linejoin="round"/>
<path transform="translate(765,510.5)" d="M9.8 7 Q9.6 1.65 5.8 1.65 Q1.65 1.65 1.65 5.2 Q1.65 8.8 5.6 8.8 Q9 8.8 9.8 6 M9.8 5.5 Q9.6 11 7.6 15.35" stroke="#161616" stroke-width="3.5" fill="none" stroke-linecap="round" stroke-linejoin="round"/>
<path transform="translate(769.5,510.5)" d="M9.8 1.65 L3.1 1.65 L2.6 7.7 Q4.5 6.6 6.5 6.6 Q9.9 6.8 9.9 10.9 Q9.9 15.35 5.8 15.35 Q3 15.35 1.65 13.4" stroke="#161616" stroke-width="3.5" fill="none" stroke-linecap="round" stroke-linejoin="round"/>
<path transform="translate(811.7,510.5)" d="M1.65 4.6 Q2.8 1.65 6 1.65 Q10 1.65 10 5 Q10 7.5 6.5 10.5 L1.8 15.35 L10.2 15.35" stroke="#161616" stroke-width="3.5" fill="none" stroke-linecap="round" stroke-linejoin="round"/>
<path transform="translate(825.8,510.5)" d="M8.8 1.65 Q4 3 2.3 8 Q1.65 10 1.8 11.5 Q2.2 15.35 6 15.35 Q9.9 15.35 9.9 11.3 Q9.9 7.6 6.2 7.6 Q3.5 7.6 2 10" stroke="#161616" stroke-width="3.5" fill="none" stroke-linecap="round" stroke-linejoin="round"/>
<path transform="translate(866,510.5)" d="M1.65 4.6 Q2.8 1.65 6 1.65 Q10 1.65 10 5 Q10 7.5 6.5 10.5 L1.8 15.35 L10.2 15.35" stroke="#767676" stroke-width="3.5" fill="none" stroke-linecap="round" stroke-linejoin="round"/>
<path transform="translate(878,510.5)" d="M1.65 1.65 L9.9 1.65 L4.3 15.35" stroke="#767676" stroke-width="3.5" fill="none" stroke-linecap="round" stroke-linejoin="round"/>
<path transform="translate(879.5,510.5)" d="M1.65 1.65 L9.9 1.65 L4.3 15.35" stroke="#767676" stroke-width="3.5" fill="none" stroke-linecap="round" stroke-linejoin="round"/>
<path transform="translate(920.5,510.5)" d="M1.65 4.6 Q2.8 1.65 6 1.65 Q10 1.65 10 5 Q10 7.5 6.5 10.5 L1.8 15.35 L10.2 15.35" stroke="#d1111b" stroke-width="3.5" fill="none" stroke-linecap="round" stroke-linejoin="round"/>
<path transform="translate(932,510.5)" d="M5.8 1.65 A3.4 3.15 0 1 0 5.81 1.65Z M5.8 7.85 A4.1 3.75 0 1 0 5.81 7.85Z" stroke="#d1111b" stroke-width="3.5" fill="none" stroke-linecap="round" stroke-linejoin="round"/>
<path transform="translate(598,541.5)" d="M1.65 4.6 Q2.8 1.65 6 1.65 Q10 1.65 10 5 Q10 7.5 6.5 10.5 L1.8 15.35 L10.2 15.35" stroke="#161616" stroke-width="3.5" fill="none" stroke-linecap="round" stroke-linejoin="round"/>
<path transform="translate(609,541.5)" d="M9.8 7 Q9.6 1.65 5.8 1.65 Q1.65 1.65 1.65 5.2 Q1.65 8.8 5.6 8.8 Q9 8.8 9.8 6 M9.8 5.5 Q9.6 11 7.6 15.35" stroke="#161616" stroke-width="3.5" fill="none" stroke-linecap="round" stroke-linejoin="round"/>
<path transform="translate(598,541.5)" d="M1.65 4.6 Q2.8 1.65 6 1.65 Q10 1.65 10 5 Q10 7.5 6.5 10.5 L1.8 15.35 L10.2 15.35" stroke="#d1111b" stroke-width="3.5" fill="none" stroke-linecap="round" stroke-linejoin="round"/>
<path transform="translate(609.5,541.5)" d="M1.8 3.1 Q4 1.65 6.5 1.65 Q9.8 1.65 9.8 4.6 Q9.8 7.8 5.6 8 Q9.9 8.2 9.9 11.6 Q9.9 15.35 5.8 15.35 Q3 15.35 1.65 13.4" stroke="#d1111b" stroke-width="3.5" fill="none" stroke-linecap="round" stroke-linejoin="round"/>
<path transform="translate(650,541.5)" d="M1.65 4.6 Q2.8 1.65 6 1.65 Q10 1.65 10 5 Q10 7.5 6.5 10.5 L1.8 15.35 L10.2 15.35" stroke="#161616" stroke-width="3.5" fill="none" stroke-linecap="round" stroke-linejoin="round"/>
<path transform="translate(650.5,541.5)" d="M1.8 3.1 Q4 1.65 6.5 1.65 Q9.8 1.65 9.8 4.6 Q9.8 7.8 5.6 8 Q9.9 8.2 9.9 11.6 Q9.9 15.35 5.8 15.35 Q3 15.35 1.65 13.4" stroke="#161616" stroke-width="3.5" fill="none" stroke-linecap="round" stroke-linejoin="round"/>
<path transform="translate(664,541.5)" d="M9.8 7 Q9.6 1.65 5.8 1.65 Q1.65 1.65 1.65 5.2 Q1.65 8.8 5.6 8.8 Q9 8.8 9.8 6 M9.8 5.5 Q9.6 11 7.6 15.35" stroke="#161616" stroke-width="3.5" fill="none" stroke-linecap="round" stroke-linejoin="round"/>
<path transform="translate(663.5,541.5)" d="M5.5 1.6500000000000004 A3.85 6.85 0 1 0 5.51 1.6500000000000004Z" stroke="#161616" stroke-width="3.5" fill="none" stroke-linecap="round" stroke-linejoin="round"/>
<path transform="translate(705,541.5)" d="M1.65 4.6 Q2.8 1.65 6 1.65 Q10 1.65 10 5 Q10 7.5 6.5 10.5 L1.8 15.35 L10.2 15.35" stroke="#161616" stroke-width="3.5" fill="none" stroke-linecap="round" stroke-linejoin="round"/>
<path transform="translate(716.4,541.5)" d="M9.8 1.65 L3.1 1.65 L2.6 7.7 Q4.5 6.6 6.5 6.6 Q9.9 6.8 9.9 10.9 Q9.9 15.35 5.8 15.35 Q3 15.35 1.65 13.4" stroke="#161616" stroke-width="3.5" fill="none" stroke-linecap="round" stroke-linejoin="round"/>
<path transform="translate(758.7,541.5)" d="M1.65 4.6 Q2.8 1.65 6 1.65 Q10 1.65 10 5 Q10 7.5 6.5 10.5 L1.8 15.35 L10.2 15.35" stroke="#161616" stroke-width="3.5" fill="none" stroke-linecap="round" stroke-linejoin="round"/>
<path transform="translate(771,541.5)" d="M8.8 1.65 Q4 3 2.3 8 Q1.65 10 1.8 11.5 Q2.2 15.35 6 15.35 Q9.9 15.35 9.9 11.3 Q9.9 7.6 6.2 7.6 Q3.5 7.6 2 10" stroke="#161616" stroke-width="3.5" fill="none" stroke-linecap="round" stroke-linejoin="round"/>
<path transform="translate(811.7,541.5)" d="M1.65 4.6 Q2.8 1.65 6 1.65 Q10 1.65 10 5 Q10 7.5 6.5 10.5 L1.8 15.35 L10.2 15.35" stroke="#161616" stroke-width="3.5" fill="none" stroke-linecap="round" stroke-linejoin="round"/>
<path transform="translate(825.5,541.5)" d="M1.65 1.65 L9.9 1.65 L4.3 15.35" stroke="#161616" stroke-width="3.5" fill="none" stroke-linecap="round" stroke-linejoin="round"/>
<path transform="translate(866.5,541.5)" d="M1.65 4.6 Q2.8 1.65 6 1.65 Q10 1.65 10 5 Q10 7.5 6.5 10.5 L1.8 15.35 L10.2 15.35" stroke="#767676" stroke-width="3.5" fill="none" stroke-linecap="round" stroke-linejoin="round"/>
<path transform="translate(879,541.5)" d="M5.8 1.65 A3.4 3.15 0 1 0 5.81 1.65Z M5.8 7.85 A4.1 3.75 0 1 0 5.81 7.85Z" stroke="#767676" stroke-width="3.5" fill="none" stroke-linecap="round" stroke-linejoin="round"/>
<path transform="translate(0,-33)" d="M406 428 L406 460" stroke="#ae5319" stroke-width="8.5" fill="none" stroke-linecap="round" stroke-linejoin="round"/>
<path transform="translate(0,-33)" d="M399.5 429.5 a7.5 9.5 0 1 0 0.01 0Z" stroke="#ae5319" stroke-width="6" fill="none" stroke-linecap="round" stroke-linejoin="round"/>
<path transform="translate(0,-33)" d="M414.8 429.4 a7.3 9.3 0 1 0 0.01 0Z" stroke="#ae5319" stroke-width="6" fill="none" stroke-linecap="round" stroke-linejoin="round"/>
<path transform="translate(0,-33)" d="M432 440.5 L447.5 436 Q448 428.5 439 429.5 Q430.5 430.5 430.5 440 Q431 450 440 449.2 Q446 448.5 449 445" stroke="#ae5319" stroke-width="6.5" fill="none" stroke-linecap="round" stroke-linejoin="round"/>
<path transform="translate(0,-33)" d="M453.5 430 Q453.5 426.5 457 426.5 L470 426.5 Q478 427 478 439.5 Q478 453 469 453 L457 453 Q453.5 453 453.5 449.5Z" fill="#ae5319"/>
<path transform="translate(0,-33)" d="M458.6 432 L458.9 447.5" stroke="#fff" stroke-width="1.3" opacity="0.85"/>
<path transform="translate(0,-33)" d="M479.5 428 L479.5 460" stroke="#ae5319" stroke-width="9" fill="none" stroke-linecap="round" stroke-linejoin="round"/>
<path transform="translate(0,-33)" d="M489 429.2 a7.2 10.8 0 1 0 0.01 0Z" stroke="#ae5319" stroke-width="10" fill="none" stroke-linecap="round" stroke-linejoin="round"/>
<path transform="translate(0,-33)" d="M510.6 427.8 a8.2 10.6 0 1 0 0.01 0Z" stroke="#ae5319" stroke-width="6.5" fill="none" stroke-linecap="round" stroke-linejoin="round"/>
<path transform="translate(0,-33)" d="M520.5 428 L520.5 448 L523 451" stroke="#ae5319" stroke-width="7.5" fill="none" stroke-linecap="round" stroke-linejoin="round"/>
<path transform="translate(0,-33)" d="M531 429 L547.5 429 M547.5 429 L547.5 448 M533 429 Q532.5 446 526.5 448" stroke="#ae5319" stroke-width="7" fill="none" stroke-linecap="round" stroke-linejoin="round"/>
<path transform="translate(0,-33)" d="M557.5 429.5 L557.5 448" stroke="#ae5319" stroke-width="6.5" fill="none" stroke-linecap="round" stroke-linejoin="round"/>
<path transform="translate(0,-33)" d="M563.9 436.5 a7 6 0 1 0 0.01 0Z" stroke="#ae5319" stroke-width="6" fill="none" stroke-linecap="round" stroke-linejoin="round"/>
<path transform="translate(0,-33)" d="M196 602 C181 594 180 576 196 576.5 Q199 577 201 579 L231.5 601.5 L235.5 575" stroke="#c3c3c3" stroke-width="13" fill="none" stroke-linecap="round" stroke-linejoin="round"/>
<path transform="translate(0,-33)" d="M196 502 C181 494 180 476 196 476.5 Q199 477 201 479 L231.5 501.5 L235.5 475" stroke="#c3c3c3" stroke-width="13" fill="none" stroke-linecap="round" stroke-linejoin="round"/>
<path transform="translate(0,-33)" d="M209.3 521.4 a26.3 19 0 1 0 0.01 0Z" stroke="#c3c3c3" stroke-width="13" fill="none" stroke-linecap="round" stroke-linejoin="round"/>
<path transform="translate(0,-33)" d="M223.5 425.5 a18 17.5 0 1 0 0.01 0Z" stroke="#c3c3c3" stroke-width="12.5" fill="none" stroke-linecap="round" stroke-linejoin="round"/>
<path transform="translate(0,-33)" d="M180 433.5 Q190 455 209 458" stroke="#c3c3c3" stroke-width="12.5" fill="none" stroke-linecap="round" stroke-linejoin="round"/>
</svg>
</div><div class="a" style="left:26px;top:54px;width:264px;height:278px;background:#f0f0f0;border:1px solid #a6a6a6;border-radius:5px;box-shadow:0 5px 11px rgba(0,0,0,0.22);overflow:hidden">
  <div class="a" style="left:0;top:0;width:261px;height:30px;background:#f3f3f3"></div>
  <div class="a" style="left:9px;top:9px;font-size:11.5px;color:#8c8c8c">Слои</div>
  <div class="a" style="left:242px;top:7px;width:19px;height:19px;background:#dadada"></div><svg class="a" style="left:242px;top:7px" width="19" height="19"><path d="M7 7 L12 12 M12 7 L7 12" stroke="#f6f6f6" stroke-width="1.1"/></svg>
  <div class="a" style="left:2px;top:38px;font-size:11px;color:#000">Режим:</div>
  <div class="a" style="left:42px;top:33px;width:108px;height:20px;background:#fdfdfd;border:1px solid #d4d4d4;border-radius:3px"></div>
  <div class="a" style="left:44.5px;top:38px;font-size:11px;color:#000">Обычный</div>
  <svg class="a" style="left:136px;top:39px" width="12" height="8"><path d="M1 1.5 L6 6 L11 1.5" stroke="#444" stroke-width="1" fill="none"/></svg>
  <div class="a" style="left:153px;top:38px;font-size:11px;color:#000">Непрозр.:</div>
  <div class="a" style="left:207px;top:35px;width:51px;height:18px;background:#fff;border-bottom:1px solid #8a8a8a"></div>
  <div class="a" style="left:210px;top:38px;font-size:11px;color:#000">100 %</div>
  <div class="a" style="left:244px;top:36px;width:13px;height:16px;background:#f7f7f7;border:1px solid #e0e0e0"></div>
  <svg class="a" style="left:245px;top:37px" width="12" height="14"><path d="M2.5 5.5 L6 1.5 L9.5 5.5Z M2.5 8.5 L6 12.5 L9.5 8.5Z" fill="#222"/></svg>
  <!-- table: abs coords x30..285 y111..302 => local (x-27, y-55) -->
  <div class="a" style="left:3px;top:56px;width:256px;height:192px;background:#fff;border:1px solid #8c97a3;overflow:hidden">
    <div class="a" style="left:0;top:24px;width:254px;height:29px;background:#efefef;border-bottom:1px solid #dadada"></div>
    <div class="a" style="left:0;top:174px;width:254px;height:16px;background:#efefef"></div>
    <div class="a" style="left:17px;top:181px;width:192px;height:2px;background:#808080"></div>
    <!-- column separators at abs 54,78,102,126,150,174,198 -> local x-31 -->
    <div class="a" style="left:23px;top:0;width:1px;height:53px;background:#dcdcdc"></div>
    <div class="a" style="left:47px;top:0;width:1px;height:53px;background:#dcdcdc"></div>
    <div class="a" style="left:71px;top:0;width:1px;height:53px;background:#dcdcdc"></div>
    <div class="a" style="left:95px;top:0;width:1px;height:53px;background:#dcdcdc"></div>
    <div class="a" style="left:119px;top:0;width:1px;height:53px;background:#dcdcdc"></div>
    <div class="a" style="left:143px;top:0;width:1px;height:53px;background:#dcdcdc"></div>
    <div class="a" style="left:167px;top:0;width:1px;height:53px;background:#dcdcdc"></div>
    <div class="a" style="left:206px;top:7px;font-size:11px;color:#000">Имя</div>
    <div class="a" style="left:170px;top:33px;font-size:11px;color:#000">Слой 1</div>
    <!-- swatch abs 34..50, 144..156 -->
    <div class="a" style="left:3px;top:32px;width:16px;height:12px;background:#000"></div>
    <!-- checkboxes abs x 60,84,108,132,156,180 ; y 144 -->
    <div class="a" style="left:29px;top:32px;width:13px;height:13px;background:#0560c2;border-radius:3px"></div>
    <div class="a" style="left:53px;top:32px;width:13px;height:13px;background:#0560c2;border-radius:3px"></div>
    <svg class="a" style="left:29px;top:32px" width="13" height="13"><path d="M3.3 6.8 L5.4 8.8 L9.6 4.4" stroke="#fff" stroke-width="1" fill="none"/></svg>
    <svg class="a" style="left:53px;top:32px" width="13" height="13"><path d="M3.3 6.8 L5.4 8.8 L9.6 4.4" stroke="#fff" stroke-width="1" fill="none"/></svg>
    <div class="a" style="left:77px;top:32px;width:13px;height:13px;background:#f6f6f6;border:1px solid #8a8a8a;border-radius:3px"></div>
    <div class="a" style="left:101px;top:32px;width:13px;height:13px;background:#f6f6f6;border:1px solid #8a8a8a;border-radius:3px"></div>
    <div class="a" style="left:125px;top:32px;width:13px;height:13px;background:#f6f6f6;border:1px solid #8a8a8a;border-radius:3px"></div>
    <div class="a" style="left:149px;top:32px;width:13px;height:13px;background:#f6f6f6;border:1px solid #8a8a8a;border-radius:3px"></div>
    <!-- header icons -->
    <svg class="a" style="left:0;top:0" width="254" height="24">
      <!-- eye -->
      <path d="M28 12 Q36 3.8 44.2 12 Q36 20.2 28 12Z" fill="#333"/>
      <circle cx="36.1" cy="12" r="3.3" fill="#fff"/><circle cx="36.1" cy="12" r="2" fill="#333"/>
      <!-- stamp -->
      <rect x="57.6" y="6" width="5.6" height="7" fill="#333"/>
      <path d="M53 11.3 h2.2 v3.3 h9.6 v-3.3 h2.2 v6.4 h-14z" fill="#333"/>
      <!-- lock -->
      <path d="M80.3 10.5 v-1.8 a3.7 3.7 0 0 1 7.4 0 v0.4" stroke="#333" stroke-width="1.5" fill="none"/>
      <rect x="78" y="10.4" width="12" height="8.6" fill="#333"/>
      <!-- outline icon -->
      <rect x="101" y="5.5" width="7" height="12.5" fill="#333"/>
      <path d="M109 5.5h6 M110 7.5h5 M110 9.5h5 M110 11.5h5 M110 13.5h5 M110 15.5h5 M109 17.5h6" stroke="#333" stroke-width="1"/>
      <!-- circle in box -->
      <rect x="125" y="5.3" width="13.8" height="13.4" fill="none" stroke="#333" stroke-width="1.3"/>
      <circle cx="131.9" cy="12" r="5" fill="none" stroke="#333" stroke-width="1.3"/>
      <!-- cursor -->
      <path d="M151.3 4.6 L151.3 17 L154.2 14.2 L156.9 20 L158.9 19.1 L156.3 13.4 L160.4 13.1 Z" fill="#333"/>
    </svg>
  </div>
  <!-- buttons abs y 307..327; x 35,87,138,189,240 -> local x-27, y-55 -->
  <div class="a" style="left:8px;top:252px;width:45px;height:20px;background:#fdfdfd;border:1px solid #d2d2d2;border-radius:4px"></div>
  <div class="a" style="left:60px;top:252px;width:45px;height:20px;background:#f8f8f8;border:1px solid #ececec;border-radius:4px"></div>
  <div class="a" style="left:111px;top:252px;width:46px;height:20px;background:#fdfdfd;border:1px solid #d2d2d2;border-radius:4px"></div>
  <div class="a" style="left:162px;top:252px;width:45px;height:20px;background:#f8f8f8;border:1px solid #ececec;border-radius:4px"></div>
  <div class="a" style="left:213px;top:252px;width:45px;height:20px;background:#f8f8f8;border:1px solid #ececec;border-radius:4px"></div>
  <svg class="a" style="left:0;top:250px" width="261" height="25">
    <path d="M31 7v10 M26 12h10" stroke="#222" stroke-width="2"/>
    <path d="M77 12h9" stroke="#7a7a7a" stroke-width="2"/>
    <rect x="127.5" y="6.5" width="8" height="11" fill="#fff" stroke="#333" stroke-width="1"/>
    <rect x="130" y="8" width="9.5" height="12" fill="#333"/>
    <path d="M184 5 L190 12 L186.5 12 L186.5 19 L181.5 19 L181.5 12 L178 12 Z" fill="#7a7a7a"/>
    <path d="M235 19 L241 12 L237.5 12 L237.5 5 L232.5 5 L232.5 12 L229 12 Z" fill="#7a7a7a"/>
  </svg>
</div>
<div class="a" style="left:1010px;top:104px;width:170px;height:553px;background:#f0f0f0;border:1px solid #a6a6a6;border-radius:5px;box-shadow:0 5px 11px rgba(0,0,0,0.22);overflow:hidden">
  <div class="a" style="left:0;top:0;width:170px;height:30px;background:#f3f3f3"></div>
  <div class="a" style="left:8px;top:8px;font-size:12px;color:#8c8c8c;white-space:nowrap">Палитра страниц</div>
  <div class="a" style="left:3px;top:34px;font-size:11px;color:#000;white-space:nowrap">Доступные мастер-страницы:</div>
  <div class="a" style="left:3px;top:51px;width:170px;height:190px;background:#fff;border:1px solid #8c97a3"></div>
  <div class="a" style="left:7px;top:54.5px;font-size:11px;color:#000;line-height:15px;white-space:nowrap">u182_u187<br>u378_u37d<br>u566_u56b<br>ud5_uda</div>
  <div class="a" style="left:3px;top:247px;font-size:11px;color:#000;white-space:nowrap">Страницы документа:</div>
  <div class="a" style="left:3px;top:264px;width:170px;height:189px;background:#fff;border:1px solid #8c97a3;overflow:hidden">
    <!-- abs origin x 1015, y 370 -->
    <div class="a" style="left:6px;top:22px;width:26px;height:30px;background:#f8f8f8;border:1px solid #7c7c7c"></div>
    <div class="a" style="left:1px;top:74px;width:35px;height:32px;background:#ececec"></div>
    <div class="a" style="left:6px;top:75px;width:26px;height:30px;background:#b4d2ef;border:1px solid #5f7f9e"></div>
    <div class="a" style="left:6px;top:128px;width:26px;height:30px;background:#f8f8f8;border:1px solid #7c7c7c"></div>
    <div class="a" style="left:6px;top:181px;width:26px;height:30px;background:#f8f8f8;border:1px solid #7c7c7c"></div>
    <div class="a" style="left:6px;top:24px;width:26px;font-size:9px;line-height:13px;text-align:center;color:#000">1<br>182</div>
    <div class="a" style="left:6px;top:77px;width:26px;font-size:9px;line-height:13px;text-align:center;color:#000">2<br>566</div>
    <div class="a" style="left:6px;top:130px;width:26px;font-size:9px;line-height:13px;text-align:center;color:#000">3<br>566</div>
    <div class="a" style="left:6px;top:183px;width:26px;font-size:9px;line-height:13px;text-align:center;color:#000">4<br>566</div>
  </div>
  <!-- group box abs x1014 y570..650 -->
  <div class="a" style="left:3px;top:466px;width:170px;height:80px;border:1px solid #dcdcdc;border-radius:2px"></div>
  <div class="a" style="left:9px;top:460.5px;padding:0 2px;background:#f0f0f0;font-size:11px;color:#000;white-space:nowrap">Макет документа</div>
  <div class="a" style="left:10px;top:479px;width:170px;height:22px;background:#fbfbfb;border:1px solid #dedede;border-radius:3px"></div>
  <svg class="a" style="left:16px;top:483px" width="15" height="15">
    <rect x="0.5" y="0.5" width="13" height="13" fill="#fff" stroke="#222" stroke-width="1"/>
    <path d="M3 11 L11 3 M6.5 3 H11 V7.5 M3 6.5 V11 H7.5" stroke="#222" stroke-width="1.6" fill="none"/>
  </svg>
  <div class="a" style="left:32.5px;top:486px;font-size:11px;color:#000;white-space:nowrap">Одиночная страница</div>
  <div class="a" style="left:10px;top:506px;font-size:11px;color:#000;white-space:nowrap">Первая страница:</div>
  <div class="a" style="left:10px;top:520px;width:170px;height:20px;background:#f9f9f9;border:1px solid #e6e6e6;border-radius:3px"></div>
</div>
<div class="a" style="left:0;top:893px;width:1164px;height:45px;background:#f0f0f0"></div>
<div class="a" style="left:577px;top:901px;width:587px;height:2px;background:#7c7c7c"></div>
<div class="a" style="left:0;top:910px;width:1164px;height:1px;background:#a3aab2"></div>
<svg class="a" style="left:0;top:911px" width="1164" height="27">
  <rect x="528" y="2" width="1" height="24" fill="#d4d4d4"/>
  <rect x="650" y="2" width="1" height="24" fill="#d4d4d4"/>
  <rect x="773" y="2" width="1" height="24" fill="#d4d4d4"/>
  <!-- zoom spin -->
  <rect x="779" y="6" width="72" height="17" fill="#fff"/>
  <rect x="779" y="22" width="72" height="1" fill="#8c8c8c"/>
  <rect x="836" y="7" width="14" height="14" fill="#f7f7f7" stroke="#e2e2e2" stroke-width="1"/>
  <path d="M839.5 12 L843 8.5 L846.5 12Z M839.5 16 L843 19.5 L846.5 16Z" fill="#222"/>
  <text x="782" y="18.5" font-size="11" fill="#000" textLength="39" lengthAdjust="spacingAndGlyphs">100,00 %</text>
  <!-- zoom icons -->
  <g fill="none" stroke="#333" stroke-width="1.7">
    <circle cx="864" cy="12" r="4.6"/><path d="M867.5 15.5 L871.5 19.5" stroke-width="2.3"/><path d="M861.5 12h5"/>
    <circle cx="887" cy="12" r="4.6"/><path d="M890.5 15.5 L894.5 19.5" stroke-width="2.3"/>
    <circle cx="910" cy="12" r="4.6"/><path d="M913.5 15.5 L917.5 19.5" stroke-width="2.3"/><path d="M907.5 12h5M910 9.5v5"/>
  </g>
  <circle cx="887" cy="12" r="1.8" fill="#333"/>
  <rect x="922" y="2" width="1" height="24" fill="#d4d4d4"/>
  <!-- nav arrows -->
  <g fill="#333">
    <rect x="929" y="6" width="2" height="15"/>
    <path d="M932 13.5 L938 7.5 L938 11.5 L945 11.5 L945 15.5 L938 15.5 L938 19.5Z"/>
    <path d="M951 13.5 L957 7.5 L957 11.5 L964.5 11.5 L964.5 15.5 L957 15.5 L957 19.5Z"/>
    <path d="M1071.5 13.5 L1065.5 7.5 L1065.5 11.5 L1058 11.5 L1058 15.5 L1065.5 15.5 L1065.5 19.5Z"/>
    <path d="M1090.5 13.5 L1084.5 7.5 L1084.5 11.5 L1077 11.5 L1077 15.5 L1084.5 15.5 L1084.5 19.5Z"/>
    <rect x="1092" y="6" width="2" height="15"/>
  </g>
  <!-- page combo -->
  <rect x="969.5" y="3.5" width="58" height="21" fill="#fff" stroke="#a0a0a0" stroke-width="1"/>
  <rect x="1011" y="4" width="1" height="20" fill="#a0a0a0"/>
  <path d="M1019.5 8v6" stroke="#333" stroke-width="2"/><path d="M1015.5 13 L1019.5 18 L1023.5 13Z" fill="#333"/>
  <text x="986" y="19" font-size="12" fill="#000">2</text>
  <text x="1032" y="18.5" font-size="11" fill="#000" textLength="22" lengthAdjust="spacingAndGlyphs">из 13</text>
  <rect x="1097" y="2" width="1" height="24" fill="#d4d4d4"/>
  <!-- layer combo -->
  <rect x="1102.5" y="3.5" width="70" height="21" fill="#fff" stroke="#a0a0a0" stroke-width="1"/>
  <rect x="1107" y="8" width="16" height="12" fill="#000"/>
  <text x="1126" y="18.5" font-size="11" fill="#000" textLength="29.5" lengthAdjust="spacingAndGlyphs">Слой 1</text>
</svg>
<svg class="a" style="left:0;top:938px" width="1164" height="37">
  <defs>
    <linearGradient id="tbg" x1="0" x2="1" y1="0" y2="0">
      <stop offset="0" stop-color="#1f1d1d"/>
      <stop offset="0.17" stop-color="#222020"/>
      <stop offset="0.25" stop-color="#33231a"/>
      <stop offset="0.31" stop-color="#3a2119"/>
      <stop offset="0.37" stop-color="#301c18"/>
      <stop offset="0.45" stop-color="#2c1c1a"/>
      <stop offset="0.7" stop-color="#2e1d19"/>
      <stop offset="1" stop-color="#36201a"/>
    </linearGradient>
    <linearGradient id="win" x1="0" x2="1" y1="0" y2="1"><stop offset="0" stop-color="#6ce0ff"/><stop offset="1" stop-color="#1a8ef0"/></linearGradient>
    <linearGradient id="edge" x1="0" x2="1" y1="0" y2="0.6"><stop offset="0" stop-color="#3ac6f8"/><stop offset="0.55" stop-color="#2fc2c8"/><stop offset="1" stop-color="#62e45a"/></linearGradient>
    <linearGradient id="mx" x1="0" x2="1" y1="0" y2="1"><stop offset="0" stop-color="#2a63c8"/><stop offset="1" stop-color="#2bd8c8"/></linearGradient>
    <linearGradient id="fold" x1="0" x2="0" y1="0" y2="1"><stop offset="0" stop-color="#ffd95a"/><stop offset="1" stop-color="#f0b420"/></linearGradient>
  </defs>
  <rect width="1164" height="37" fill="url(#tbg)"/>
  <rect width="1164" height="1" fill="#3a3636"/>
  <text x="-3.5" y="19.5" font-size="11" font-weight="bold" fill="#f2f2f2">9°C</text>
  <text x="-2" y="33" font-size="12" fill="#d2d2d2">ewölkt</text>
  <!-- windows logo -->
  <g fill="url(#win)">
    <rect x="470" y="13" width="11" height="11" rx="1"/><rect x="482" y="13" width="11" height="11" rx="1"/>
    <rect x="470" y="25" width="11" height="11" rx="1"/><rect x="482" y="25" width="11" height="11" rx="1"/>
  </g>
  <!-- search -->
  <rect x="506.5" y="8" width="219" height="36" rx="18" fill="#4a3a36" stroke="#5c4c47" stroke-width="1"/>
  <circle cx="525.5" cy="22.5" r="5" fill="none" stroke="#e6e0de" stroke-width="1.7"/>
  <path d="M529 26 L532.5 29.5" stroke="#e6e0de" stroke-width="1.8"/>
  <text x="542.5" y="28.5" font-size="14" fill="#e2dcda">Suche</text>
  <!-- task view -->
  <rect x="741" y="16" width="18" height="14" rx="2" fill="#f4f4f4"/>
  <rect x="738" y="21" width="17" height="14" rx="2" fill="#8a8a8a" opacity="0.9"/>
  <!-- teams -->
  <circle cx="799" cy="22" r="6" fill="#7b83eb"/>
  <rect x="790" y="21" width="15" height="14" rx="5" fill="#5b5fc7"/>
  <rect x="782" y="19" width="11" height="11" rx="1.5" fill="#4b53bc"/>
  <text x="784.5" y="28.5" font-size="9" font-weight="bold" fill="#fff">T</text>
  <circle cx="802.5" cy="15" r="7" fill="#f0866b"/>
  <text x="799.5" y="19" font-size="11" fill="#111">3</text>
  <!-- store -->
  <rect x="826" y="18" width="23" height="18" rx="3" fill="#f4f4f4"/>
  <path d="M831 18 V14 Q831 12 833 12 H842 Q844 12 844 14 V18" stroke="#2aa8e8" stroke-width="1.8" fill="none"/>
  <rect x="832" y="21.5" width="5" height="5" fill="#f25022"/><rect x="838" y="21.5" width="5" height="5" fill="#7fba00"/>
  <rect x="832" y="27.5" width="5" height="5" fill="#00a4ef"/><rect x="838" y="27.5" width="5" height="5" fill="#ffb900"/>
  <!-- edge -->
  <circle cx="882.1" cy="23.7" r="12" fill="url(#edge)"/>
  <path d="M870.1 22.5 A12 12 0 0 0 891.5 31.2 Q884 31.5 879.5 28.5 Q876.5 25.5 878 21.5 Q880 18 884.5 18.2 Q878 15 873 18 Q871 19.8 870.1 22.5Z" fill="#0f78d8"/>
  <path d="M878 21.5 Q876.5 25.5 879.5 28.5 Q884 31.5 891.5 31.2 Q887 35.5 880 35 Q876 33 875.5 27.5 Q875.5 23 878 21.5Z" fill="#0b57a8"/>
  <circle cx="881.6" cy="24.6" r="2.7" fill="#2c1c19"/>
  <path d="M880.5 26.5 Q884 29.8 891.8 29.6" stroke="#2c1c19" stroke-width="1.4" fill="none"/>
  <!-- maxthon -->
  <rect x="914" y="12" width="24" height="24" rx="3" fill="url(#mx)"/>
  <path d="M918 32 V20 H934 V32 H930 V24 H928 V32 H924 V24 H922 V32Z" fill="#fff"/>
  <!-- scanner -->
  <rect x="958" y="12" width="24" height="24" rx="3" fill="#1f3fa8"/>
  <path d="M962 32 L968 20 H972 L978 32Z" fill="#fff"/>
  <rect x="962" y="16" width="16" height="3" fill="#b8c8f0"/>
  <path d="M964 28 L976 24" stroke="#3aa0ff" stroke-width="1.5"/>
  <!-- chrome -->
  <circle cx="1014" cy="24" r="12" fill="#db3b2b"/>
  <path d="M1014 24 L1003.6 18 A12 12 0 0 0 1008 34.4Z" fill="#1e9a48"/>
  <path d="M1014 24 L1008 34.4 A12 12 0 0 0 1026 24Z" fill="#fcc934"/>
  <circle cx="1014" cy="24" r="5.6" fill="#fff"/><circle cx="1014" cy="24" r="4.3" fill="#3b82f0"/>
  <!-- folder -->
  <path d="M1046 15 Q1046 13 1048 13 H1054 L1056 15 H1068 Q1070 15 1070 17 V34 Q1070 35 1069 35 H1047 Q1046 35 1046 34Z" fill="url(#fold)"/>
  <rect x="1050" y="26" width="16" height="9" rx="2" fill="#1a7fd8"/>
  <!-- utorrent -->
  <circle cx="1102" cy="24" r="12" fill="#64ad45"/>
  <path d="M1097.5 17 L1095 33 M1097 25 Q1098 30 1103 29 Q1107 28 1108 24 L1109.5 17 M1108.2 23.5 Q1107.5 29 1111 29.5" stroke="#fff" stroke-width="3.4" fill="none" stroke-linecap="round"/>
  <!-- whatsapp -->
  <circle cx="1146" cy="24" r="10.5" fill="none" stroke="#25d366" stroke-width="2.2"/>
  <path d="M1136 35 L1138 29 L1141 33Z" fill="#25d366"/>
  <path d="M1142 20 Q1142 28 1150 29" stroke="#25d366" stroke-width="3" fill="none" stroke-linecap="round"/>
  <rect x="1145" y="6" width="24" height="16" rx="8" fill="#f0866b"/>
  <text x="1148" y="18.5" font-size="12" fill="#111">28</text>
</svg>
</body></html>
